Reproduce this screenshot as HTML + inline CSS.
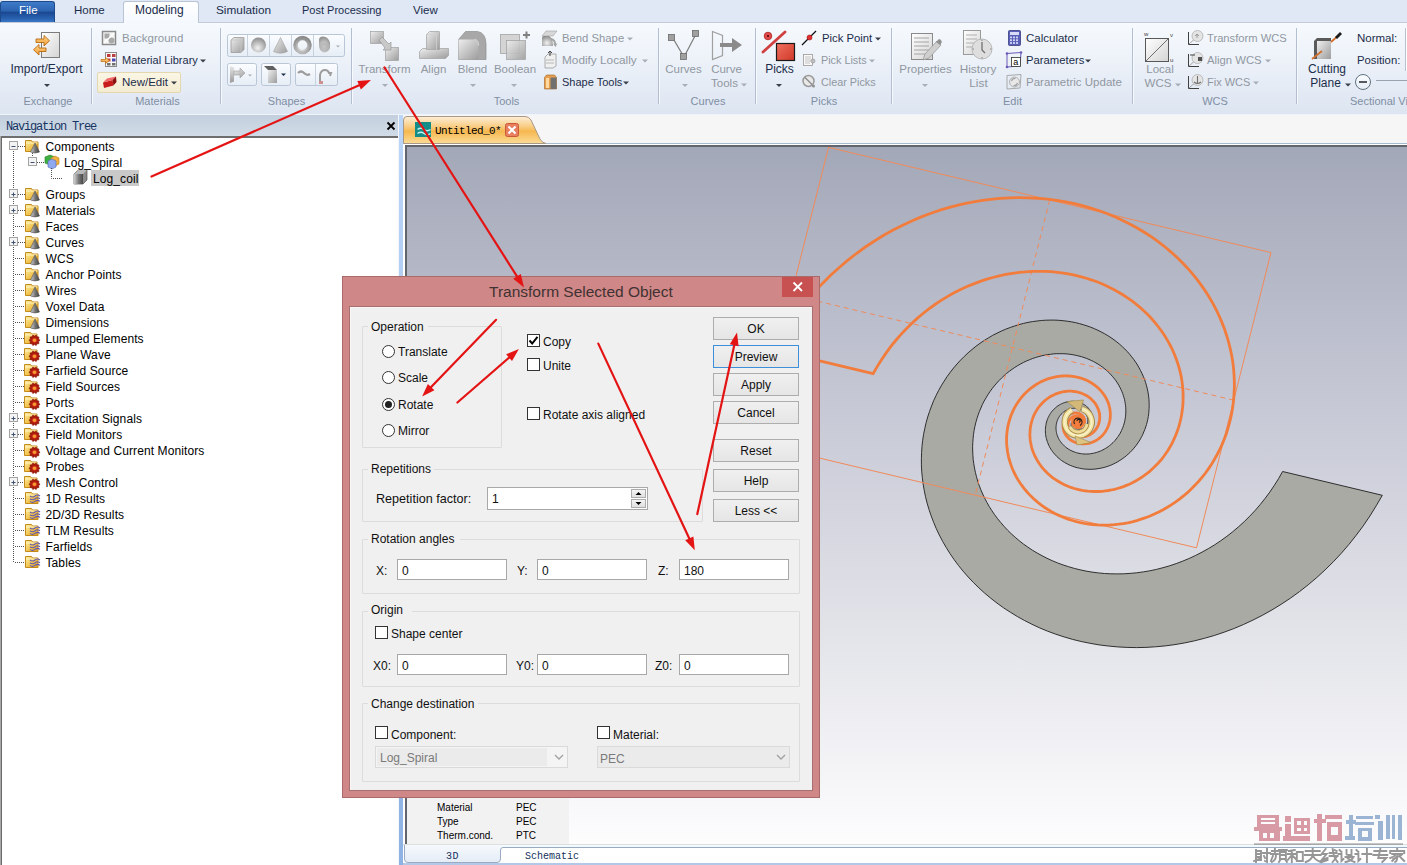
<!DOCTYPE html><html><head><meta charset="utf-8"><style>
html,body{margin:0;padding:0}
body{width:1407px;height:865px;overflow:hidden;position:relative;background:#fff;font-family:'Liberation Sans',sans-serif}
.a{position:absolute;box-sizing:border-box}
.t{position:absolute;white-space:nowrap}
svg{position:absolute;overflow:visible}
</style></head><body>
<div class="a" style="left:0px;top:0px;width:1407px;height:23px;background:#dfe8f4;border-bottom:1px solid #c2cbd7"></div>
<div class="a" style="left:0px;top:1px;width:55px;height:21px;background:linear-gradient(#3f7bc9 0%,#2c63b0 45%,#1b4892 52%,#2a64b3 85%,#3a78c6 100%);border:1px solid #1d4a8c;border-bottom:none;border-radius:3px 3px 0 0"></div>
<div class="t" style="left:19px;top:4px;font-size:11.5px;line-height:13px;color:#ffffff;font-family:'Liberation Sans',sans-serif;">File</div>
<div class="t" style="left:74px;top:4px;font-size:11.5px;line-height:13px;color:#1a2c4c;font-family:'Liberation Sans',sans-serif;">Home</div>
<div class="a" style="left:123px;top:1px;width:76px;height:23px;background:linear-gradient(#ffffff,#f4f8fd);border:1px solid #b9c5d5;border-bottom:none;border-radius:3px 3px 0 0"></div>
<div class="t" style="left:135px;top:4px;font-size:12px;line-height:13px;color:#1a2c4c;font-family:'Liberation Sans',sans-serif;">Modeling</div>
<div class="t" style="left:216px;top:4px;font-size:11.8px;line-height:13px;color:#1a2c4c;font-family:'Liberation Sans',sans-serif;">Simulation</div>
<div class="t" style="left:302px;top:4px;font-size:11px;line-height:12px;color:#1a2c4c;font-family:'Liberation Sans',sans-serif;">Post Processing</div>
<div class="t" style="left:413px;top:4px;font-size:11.5px;line-height:13px;color:#1a2c4c;font-family:'Liberation Sans',sans-serif;">View</div>
<div class="a" style="left:0px;top:23px;width:1407px;height:92px;background:linear-gradient(#f6fafe 0%,#edf2f9 40%,#e2e9f4 80%,#dce5f1 100%);border-bottom:1px solid #eef4fa"></div>
<div class="a" style="left:91px;top:28px;width:1px;height:76px;background:#b3bfd0"></div>
<div class="a" style="left:92px;top:28px;width:1px;height:76px;background:#f6f9fd"></div>
<div class="a" style="left:220px;top:28px;width:1px;height:76px;background:#b3bfd0"></div>
<div class="a" style="left:221px;top:28px;width:1px;height:76px;background:#f6f9fd"></div>
<div class="a" style="left:351px;top:28px;width:1px;height:76px;background:#b3bfd0"></div>
<div class="a" style="left:352px;top:28px;width:1px;height:76px;background:#f6f9fd"></div>
<div class="a" style="left:658px;top:28px;width:1px;height:76px;background:#b3bfd0"></div>
<div class="a" style="left:659px;top:28px;width:1px;height:76px;background:#f6f9fd"></div>
<div class="a" style="left:755px;top:28px;width:1px;height:76px;background:#b3bfd0"></div>
<div class="a" style="left:756px;top:28px;width:1px;height:76px;background:#f6f9fd"></div>
<div class="a" style="left:891px;top:28px;width:1px;height:76px;background:#b3bfd0"></div>
<div class="a" style="left:892px;top:28px;width:1px;height:76px;background:#f6f9fd"></div>
<div class="a" style="left:1132px;top:28px;width:1px;height:76px;background:#b3bfd0"></div>
<div class="a" style="left:1133px;top:28px;width:1px;height:76px;background:#f6f9fd"></div>
<div class="a" style="left:1296px;top:28px;width:1px;height:76px;background:#b3bfd0"></div>
<div class="a" style="left:1297px;top:28px;width:1px;height:76px;background:#f6f9fd"></div>
<div class="t" style="left:-52px;top:95px;width:200px;text-align:center;font-size:11px;line-height:12px;color:#7f8ea3;font-family:'Liberation Sans',sans-serif;">Exchange</div>
<div class="t" style="left:57.5px;top:95px;width:200px;text-align:center;font-size:11px;line-height:12px;color:#7f8ea3;font-family:'Liberation Sans',sans-serif;">Materials</div>
<div class="t" style="left:186.5px;top:95px;width:200px;text-align:center;font-size:11px;line-height:12px;color:#7f8ea3;font-family:'Liberation Sans',sans-serif;">Shapes</div>
<div class="t" style="left:406.5px;top:95px;width:200px;text-align:center;font-size:11px;line-height:12px;color:#7f8ea3;font-family:'Liberation Sans',sans-serif;">Tools</div>
<div class="t" style="left:608px;top:95px;width:200px;text-align:center;font-size:11px;line-height:12px;color:#7f8ea3;font-family:'Liberation Sans',sans-serif;">Curves</div>
<div class="t" style="left:724px;top:95px;width:200px;text-align:center;font-size:11px;line-height:12px;color:#7f8ea3;font-family:'Liberation Sans',sans-serif;">Picks</div>
<div class="t" style="left:912.5px;top:95px;width:200px;text-align:center;font-size:11px;line-height:12px;color:#7f8ea3;font-family:'Liberation Sans',sans-serif;">Edit</div>
<div class="t" style="left:1115px;top:95px;width:200px;text-align:center;font-size:11px;line-height:12px;color:#7f8ea3;font-family:'Liberation Sans',sans-serif;">WCS</div>
<div class="t" style="left:1350px;top:95px;font-size:11px;line-height:12px;color:#7f8ea3;font-family:'Liberation Sans',sans-serif;">Sectional View</div>
<div class="t" style="left:-53.5px;top:63px;width:200px;text-align:center;font-size:12px;line-height:13px;color:#1c2d4a;font-family:'Liberation Sans',sans-serif;">Import/Export</div>
<svg style="left:0;top:0" width="1" height="1"><path d="M44 84.0h6l-3 3z" fill="#3a3f4a"/></svg>
<div class="t" style="left:284.5px;top:63px;width:200px;text-align:center;font-size:11.5px;line-height:13px;color:#9097a1;font-family:'Liberation Sans',sans-serif;">Transform</div>
<svg style="left:0;top:0" width="1" height="1"><path d="M382 84.0h6l-3 3z" fill="#a8aeb8"/></svg>
<div class="t" style="left:333.5px;top:63px;width:200px;text-align:center;font-size:11.5px;line-height:13px;color:#9097a1;font-family:'Liberation Sans',sans-serif;">Align</div>
<div class="t" style="left:372.5px;top:63px;width:200px;text-align:center;font-size:11.5px;line-height:13px;color:#9097a1;font-family:'Liberation Sans',sans-serif;">Blend</div>
<svg style="left:0;top:0" width="1" height="1"><path d="M470 84.0h6l-3 3z" fill="#a8aeb8"/></svg>
<div class="t" style="left:415px;top:63px;width:200px;text-align:center;font-size:11.5px;line-height:13px;color:#9097a1;font-family:'Liberation Sans',sans-serif;">Boolean</div>
<svg style="left:0;top:0" width="1" height="1"><path d="M511 84.0h6l-3 3z" fill="#a8aeb8"/></svg>
<div class="t" style="left:583.5px;top:63px;width:200px;text-align:center;font-size:11.5px;line-height:13px;color:#9097a1;font-family:'Liberation Sans',sans-serif;">Curves</div>
<svg style="left:0;top:0" width="1" height="1"><path d="M682 84.0h6l-3 3z" fill="#a8aeb8"/></svg>
<div class="t" style="left:626.5px;top:63px;width:200px;text-align:center;font-size:11.5px;line-height:13px;color:#9097a1;font-family:'Liberation Sans',sans-serif;">Curve</div>
<div class="t" style="left:624.5px;top:77px;width:200px;text-align:center;font-size:11.5px;line-height:13px;color:#9097a1;font-family:'Liberation Sans',sans-serif;">Tools</div>
<svg style="left:0;top:0" width="1" height="1"><path d="M741 83.5h6l-3 3z" fill="#a8aeb8"/></svg>
<div class="t" style="left:679.5px;top:63px;width:200px;text-align:center;font-size:12px;line-height:13px;color:#1c2d4a;font-family:'Liberation Sans',sans-serif;">Picks</div>
<svg style="left:0;top:0" width="1" height="1"><path d="M776 84.0h6l-3 3z" fill="#3a3f4a"/></svg>
<div class="t" style="left:825.5px;top:63px;width:200px;text-align:center;font-size:11.5px;line-height:13px;color:#9097a1;font-family:'Liberation Sans',sans-serif;">Properties</div>
<svg style="left:0;top:0" width="1" height="1"><path d="M922 84.0h6l-3 3z" fill="#a8aeb8"/></svg>
<div class="t" style="left:878px;top:63px;width:200px;text-align:center;font-size:11.8px;line-height:13px;color:#9097a1;font-family:'Liberation Sans',sans-serif;">History</div>
<div class="t" style="left:878.5px;top:77px;width:200px;text-align:center;font-size:11.8px;line-height:13px;color:#9097a1;font-family:'Liberation Sans',sans-serif;">List</div>
<div class="t" style="left:1060px;top:63px;width:200px;text-align:center;font-size:11.5px;line-height:13px;color:#9097a1;font-family:'Liberation Sans',sans-serif;">Local</div>
<div class="t" style="left:1058px;top:77px;width:200px;text-align:center;font-size:11.5px;line-height:13px;color:#9097a1;font-family:'Liberation Sans',sans-serif;">WCS</div>
<svg style="left:0;top:0" width="1" height="1"><path d="M1175 83.5h6l-3 3z" fill="#a8aeb8"/></svg>
<div class="t" style="left:1227px;top:63px;width:200px;text-align:center;font-size:12px;line-height:13px;color:#1c2d4a;font-family:'Liberation Sans',sans-serif;">Cutting</div>
<div class="t" style="left:1225.5px;top:77px;width:200px;text-align:center;font-size:12px;line-height:13px;color:#1c2d4a;font-family:'Liberation Sans',sans-serif;">Plane</div>
<svg style="left:0;top:0" width="1" height="1"><path d="M1345 83.5h6l-3 3z" fill="#3a3f4a"/></svg>
<div class="a" style="left:97px;top:72px;width:84px;height:21px;background:linear-gradient(#fbf6e4,#f3ecd2);border:1px solid #e4d8b0;border-radius:2px"></div>
<div class="t" style="left:122px;top:32px;font-size:11.5px;line-height:13px;color:#9097a1;font-family:'Liberation Sans',sans-serif;">Background</div>
<div class="t" style="left:122px;top:54px;font-size:11px;line-height:12px;color:#1c2d4a;font-family:'Liberation Sans',sans-serif;">Material Library</div>
<svg style="left:0;top:0" width="1" height="1"><path d="M200 59.5h6l-3 3z" fill="#3a3f4a"/></svg>
<div class="t" style="left:122px;top:76px;font-size:11.5px;line-height:13px;color:#1c2d4a;font-family:'Liberation Sans',sans-serif;">New/Edit</div>
<svg style="left:0;top:0" width="1" height="1"><path d="M171 81.5h6l-3 3z" fill="#3a3f4a"/></svg>
<div class="t" style="left:562px;top:32px;font-size:11.3px;line-height:13px;color:#9097a1;font-family:'Liberation Sans',sans-serif;">Bend Shape</div>
<svg style="left:0;top:0" width="1" height="1"><path d="M627 37.5h6l-3 3z" fill="#a8aeb8"/></svg>
<div class="t" style="left:562px;top:54px;font-size:11.8px;line-height:13px;color:#9097a1;font-family:'Liberation Sans',sans-serif;">Modify Locally</div>
<svg style="left:0;top:0" width="1" height="1"><path d="M642 59.5h6l-3 3z" fill="#a8aeb8"/></svg>
<div class="t" style="left:562px;top:76px;font-size:11px;line-height:12px;color:#1c2d4a;font-family:'Liberation Sans',sans-serif;">Shape Tools</div>
<svg style="left:0;top:0" width="1" height="1"><path d="M623 81.5h6l-3 3z" fill="#3a3f4a"/></svg>
<div class="t" style="left:822px;top:32px;font-size:11.3px;line-height:13px;color:#1c2d4a;font-family:'Liberation Sans',sans-serif;">Pick Point</div>
<svg style="left:0;top:0" width="1" height="1"><path d="M875 37.5h6l-3 3z" fill="#3a3f4a"/></svg>
<div class="t" style="left:821px;top:54px;font-size:10.8px;line-height:12px;color:#9097a1;font-family:'Liberation Sans',sans-serif;">Pick Lists</div>
<svg style="left:0;top:0" width="1" height="1"><path d="M869 59.5h6l-3 3z" fill="#a8aeb8"/></svg>
<div class="t" style="left:821px;top:76px;font-size:10.8px;line-height:12px;color:#9097a1;font-family:'Liberation Sans',sans-serif;">Clear Picks</div>
<div class="t" style="left:1026px;top:32px;font-size:11.5px;line-height:13px;color:#1c2d4a;font-family:'Liberation Sans',sans-serif;">Calculator</div>
<div class="t" style="left:1026px;top:54px;font-size:11.3px;line-height:13px;color:#1c2d4a;font-family:'Liberation Sans',sans-serif;">Parameters</div>
<svg style="left:0;top:0" width="1" height="1"><path d="M1085 59.5h6l-3 3z" fill="#3a3f4a"/></svg>
<div class="t" style="left:1026px;top:76px;font-size:11.5px;line-height:13px;color:#9097a1;font-family:'Liberation Sans',sans-serif;">Parametric Update</div>
<div class="t" style="left:1207px;top:32px;font-size:11.2px;line-height:13px;color:#9097a1;font-family:'Liberation Sans',sans-serif;">Transform WCS</div>
<div class="t" style="left:1207px;top:54px;font-size:11.3px;line-height:13px;color:#9097a1;font-family:'Liberation Sans',sans-serif;">Align WCS</div>
<svg style="left:0;top:0" width="1" height="1"><path d="M1265 59.5h6l-3 3z" fill="#a8aeb8"/></svg>
<div class="t" style="left:1207px;top:76px;font-size:11px;line-height:12px;color:#9097a1;font-family:'Liberation Sans',sans-serif;">Fix WCS</div>
<svg style="left:0;top:0" width="1" height="1"><path d="M1253 81.5h6l-3 3z" fill="#a8aeb8"/></svg>
<div class="t" style="left:1357px;top:32px;font-size:11.5px;line-height:13px;color:#1c2d4a;font-family:'Liberation Sans',sans-serif;">Normal:</div>
<div class="t" style="left:1357px;top:54px;font-size:11.3px;line-height:13px;color:#1c2d4a;font-family:'Liberation Sans',sans-serif;">Position:</div>
<div class="a" style="left:1405px;top:28px;width:2px;height:43px;background:#fff;border-left:1px solid #b8c2ce"></div>
<svg style="left:0;top:23px" width="1407" height="92" viewBox="0 23 1407 92">
<defs>
<linearGradient id="gy" x1="0" y1="0" x2="1" y2="1"><stop offset="0" stop-color="#eeeeee"/><stop offset="1" stop-color="#9c9c9c"/></linearGradient>
<linearGradient id="gyv" x1="0" y1="0" x2="0" y2="1"><stop offset="0" stop-color="#e8e8e8"/><stop offset="1" stop-color="#9a9a9a"/></linearGradient>
<radialGradient id="sph" cx="0.45" cy="0.7" r="0.7"><stop offset="0" stop-color="#f2f2f2"/><stop offset="1" stop-color="#8c8c8c"/></radialGradient>
<linearGradient id="og" x1="0" y1="0" x2="0" y2="1"><stop offset="0" stop-color="#ffd890"/><stop offset="1" stop-color="#f09a30"/></linearGradient>
<linearGradient id="doc" x1="0" y1="0" x2="1" y2="1"><stop offset="0" stop-color="#ffffff"/><stop offset="1" stop-color="#d4d4d4"/></linearGradient>
<linearGradient id="btn" x1="0" y1="0" x2="0" y2="1"><stop offset="0" stop-color="#fbfdff"/><stop offset="1" stop-color="#e6edf6"/></linearGradient>
<linearGradient id="redg" x1="0" y1="0" x2="1" y2="1"><stop offset="0" stop-color="#f07060"/><stop offset="1" stop-color="#d03828"/></linearGradient>
</defs>
<rect x="41.5" y="32.5" width="18" height="25" fill="url(#doc)" stroke="#7c7c7c"/>
<path d="M36 39h8v-3.5l5.5 5.25l-5.5 5.25v-3.5h-8z" fill="url(#og)" stroke="#b86a10" stroke-width="0.9"/>
<path d="M46 48h-7v-3.5l-5.5 5.25l5.5 5.25v-3.5h7z" fill="url(#og)" stroke="#b86a10" stroke-width="0.9"/>
<rect x="102.5" y="31.5" width="13" height="13" fill="#f4f4f4" stroke="#8a8a8a" stroke-width="1.5"/>
<rect x="104.5" y="33.5" width="5" height="5" fill="#a8a8a8"/><circle cx="111.5" cy="40.5" r="3" fill="#a8a8a8"/><path d="M104 43L114 33" stroke="#fff" stroke-width="1.2"/>
<rect x="105.5" y="52.5" width="11" height="14" fill="#fafafa" stroke="#8a8a8a"/>
<rect x="107" y="54" width="3.5" height="3" fill="#c03838"/><rect x="112" y="54" width="3.5" height="3" fill="#b84040"/><rect x="107" y="58.5" width="3.5" height="3" fill="#c84040"/><rect x="112" y="58.5" width="3.5" height="3" fill="#4848b0"/><rect x="107" y="63" width="3.5" height="2.5" fill="#707070"/><rect x="112" y="63" width="3.5" height="2.5" fill="#707070"/>
<path d="M101 59.5h4.5v-2l4 3l-4 3v-2h-4.5z" fill="url(#og)" stroke="#b86a10" stroke-width="0.7"/>
<path d="M103 82.5L112.5 80L113.5 85.5L104 88Z" fill="#c81c1c"/><path d="M103 82.5L107 78.5L116 76.5L112.5 80Z" fill="#f06868"/><path d="M112.5 80L116 76.5L116.5 82L113.5 85.5Z" fill="#8c1010"/>
<rect x="227.5" y="34.5" width="117" height="22" rx="2" fill="url(#btn)" stroke="#b9c6d6"/>
<rect x="227.5" y="63.5" width="29" height="22" rx="2" fill="url(#btn)" stroke="#b9c6d6"/>
<rect x="261.5" y="63.5" width="29" height="22" rx="2" fill="url(#btn)" stroke="#b9c6d6"/>
<rect x="295.5" y="63.5" width="42" height="22" rx="2" fill="url(#btn)" stroke="#b9c6d6"/>
<path d="M247.5 35V56" stroke="#c8d2de"/>
<path d="M269.5 35V56" stroke="#c8d2de"/>
<path d="M291.5 35V56" stroke="#c8d2de"/>
<path d="M313.5 35V56" stroke="#c8d2de"/>
<path d="M315.5 64V85" stroke="#c8d2de"/>
<path d="M231 40l3-2.5h10v12l-3 3h-10z" fill="url(#gy)" stroke="#9a9a9a" stroke-width="0.8"/><path d="M231 40h10v12.5M241 40l3-2.5" fill="none" stroke="#c4c4c4" stroke-width="0.8"/>
<circle cx="258.5" cy="45" r="7.5" fill="url(#sph)"/>
<path d="M280.5 37.5L273.5 51.5Q280.5 55 287.5 51.5Z" fill="url(#gy)" stroke="#a0a0a0" stroke-width="0.6"/>
<circle cx="302.5" cy="45" r="7" fill="none" stroke="url(#sph)" stroke-width="4.5"/><circle cx="302.5" cy="45" r="7" fill="none" stroke="#9a9a9a" stroke-width="0.6" opacity="0.6"/>
<path d="M319 40q0-3.5 4-3.5q5 0 7 6v5q-1 4-5 4q-6-1-6-6z" fill="url(#sph)"/><ellipse cx="324.5" cy="47.5" rx="5" ry="5" fill="#b0b0b0" opacity="0.7"/>
<path d="M336 45.5h4l-2 2z" fill="#a8aeb8"/>
<path d="M230 66l4 1.5v14l-4 1.5z" fill="url(#gyv)"/><path d="M234 71h6v-3l5 5l-5 5v-3h-6z" fill="url(#gy)" stroke="#a0a0a0" stroke-width="0.6"/>
<path d="M248 74.5h4l-2 2z" fill="#a8aeb8"/>
<path d="M264 66h9l4 4v13h-9v-13z" fill="#606060"/><path d="M268 70h9v13h-9z" fill="url(#gy)"/>
<path d="M281 73.5h5l-2.5 2.5z" fill="#1c2d4a"/>
<path d="M298 73q3-3 6 0t6 1" fill="none" stroke="#9c9c9c" stroke-width="2.2"/>
<path d="M320 82v-7q1-5 5-5q3 0 4 3l2 0l-1 3" fill="none" stroke="#9c9c9c" stroke-width="2"/><rect x="319" y="81" width="4" height="3" fill="#d09090"/>
<rect x="370.5" y="31.5" width="13" height="12" fill="url(#gy)" stroke="#a0a0a0" stroke-width="0.7"/>
<rect x="385.5" y="47.5" width="13" height="13" fill="url(#gy)" stroke="#a0a0a0" stroke-width="0.7"/>
<path d="M379 40l3-3l7 7l2-2v8h-8l2-2z" fill="#c8c8c8" stroke="#9a9a9a" stroke-width="0.7"/>
<path d="M419.5 51.5l3-3h26v7l-3 3h-26z" fill="url(#gy)" stroke="#a0a0a0" stroke-width="0.7"/><path d="M426.5 34.5l3-3h10v18h-13z" fill="url(#gy)" stroke="#a0a0a0" stroke-width="0.7"/><path d="M426.5 34.5h10v15M436.5 34.5l3-3" fill="none" stroke="#d0d0d0" stroke-width="0.8"/>
<path d="M458.5 59.5v-20l7-8h12q8 1 8.5 12v16z" fill="#a8a8a8" stroke="#8e8e8e" stroke-width="0.7"/><path d="M458.5 39.5h16q4 0 4 6v14h-20z" fill="url(#gy)"/><path d="M478.5 45.5q0-6-4-6" fill="none" stroke="#d8d8d8" stroke-width="1"/>
<rect x="500.5" y="34.5" width="19" height="19" fill="#d4d4d4" stroke="#a4a4a4" stroke-width="0.8"/><rect x="506.5" y="40.5" width="19" height="19" fill="url(#gy)" stroke="#a0a0a0" stroke-width="0.8" opacity="0.9"/>
<path d="M523 35h7M526.5 31.5v7" stroke="#808080" stroke-width="2"/>
<path d="M542 36l4-5h11l-4 5z" fill="#d8d8d8" stroke="#a0a0a0" stroke-width="0.6"/><path d="M542 46v-8q0-2 2-2h5q4 2 4 10z" fill="url(#sph)"/><path d="M551 38q5 1 5 6l1.5-1l-2 4l-2.5-3.5h1.5q-1-3-3.5-4z" fill="#a0a0a0"/>
<path d="M545 57l3-3h8v12l-3 2h-8z" fill="#f0f0f0" stroke="#9a9a9a" stroke-width="0.8"/><path d="M546 60h8M546 63h8" stroke="#a8a8a8" stroke-width="0.8"/><path d="M550 56v-5M548 53l2-2l2 2" fill="none" stroke="#404040" stroke-width="1"/>
<path d="M544.5 77.5l2-2.5h8l2 2.5v11.5h-12z" fill="#e8a050" stroke="#a06020" stroke-width="0.6"/><path d="M550.5 77.5h6v11.5h-6z" fill="#707070"/><path d="M546 78h3v10h-3z" fill="#ffd8a0"/>
<path d="M672.5 37.5L684 57L696 34" fill="none" stroke="#808080" stroke-width="1.3"/>
<rect x="668.5" y="34.5" width="6" height="6" fill="#a0a0a0" stroke="#6c6c6c" stroke-width="0.8"/>
<rect x="692.5" y="30.5" width="6" height="6" fill="#a0a0a0" stroke="#6c6c6c" stroke-width="0.8"/>
<rect x="680.5" y="53.5" width="6" height="6" fill="#a0a0a0" stroke="#6c6c6c" stroke-width="0.8"/>
<path d="M712.5 31.5l10 4v20l-10 4z" fill="none" stroke="#a0a0a0" stroke-width="1.2"/><path d="M720 43h12v-5l10 7l-10 7v-5h-12z" fill="#8a8a8a"/>
<path d="M763 52L785 32" stroke="#d04040" stroke-width="2.8" stroke-linecap="round"/><circle cx="768" cy="36" r="3.8" fill="#e04a4a" stroke="#b02020" stroke-width="0.8"/><circle cx="768" cy="36" r="1" fill="#400"/>
<rect x="776.5" y="43.5" width="18" height="17" fill="url(#redg)" stroke="#1a1a1a" stroke-width="1.2"/>
<path d="M802 45L816 31" stroke="#101010" stroke-width="1.3"/><circle cx="809.5" cy="37.5" r="2.5" fill="#e03030" stroke="#a01010" stroke-width="0.6"/>
<rect x="803.5" y="54.5" width="9" height="11" fill="#f8f8f8" stroke="#9a9a9a" stroke-width="0.8"/><path d="M805 57h6M805 59h6M805 61h6M805 63h5" stroke="#b0b0b0" stroke-width="0.7"/><circle cx="813" cy="61" r="2" fill="#c0c0c0" stroke="#909090" stroke-width="0.6"/>
<circle cx="808.5" cy="81" r="5.5" fill="#e8e8e8" stroke="#9a9a9a" stroke-width="1.5"/><path d="M805 77.5l7 7" stroke="#8a8a8a" stroke-width="1.3"/><circle cx="813.5" cy="86" r="1.5" fill="#909090"/>
<rect x="911.5" y="33.5" width="21" height="26" fill="url(#doc)" stroke="#8a8a8a"/>
<path d="M914 38h15" stroke="#a4a4a4" stroke-width="1"/>
<path d="M914 42h15" stroke="#a4a4a4" stroke-width="1"/>
<path d="M914 46h15" stroke="#a4a4a4" stroke-width="1"/>
<path d="M914 50h15" stroke="#a4a4a4" stroke-width="1"/>
<path d="M914 54h15" stroke="#a4a4a4" stroke-width="1"/>
<path d="M923 60l2-6l12-13l4 4l-12 13z" fill="#cfcfcf" stroke="#9a9a9a" stroke-width="0.8"/><path d="M936 42l3-3q2 0 3 3l-2 3z" fill="#909090"/>
<rect x="963.5" y="30.5" width="17" height="24" fill="url(#doc)" stroke="#9a9a9a"/>
<path d="M966 35h11" stroke="#b0b0b0" stroke-width="1"/>
<path d="M966 39h11" stroke="#b0b0b0" stroke-width="1"/>
<path d="M966 43h11" stroke="#b0b0b0" stroke-width="1"/>
<path d="M966 47h11" stroke="#b0b0b0" stroke-width="1"/>
<circle cx="982" cy="49" r="10" fill="#dedede" stroke="#b4b4b4" stroke-width="0.9"/><path d="M982 42v8l3 3" fill="none" stroke="#707070" stroke-width="1.3"/><path d="M982 39.5v1.5M982 57v1.5M972.5 49h1.5M990 49h1.5" stroke="#8a8a8a" stroke-width="1"/>
<rect x="1008.5" y="30.5" width="12" height="15" rx="1" fill="#5860b8" stroke="#383c80" stroke-width="0.8"/><rect x="1010" y="32" width="9" height="3" fill="#d8dcf8"/>
<rect x="1010" y="36.5" width="2" height="1.8" fill="#d0d4f4"/>
<rect x="1013" y="36.5" width="2" height="1.8" fill="#d0d4f4"/>
<rect x="1016" y="36.5" width="2" height="1.8" fill="#d0d4f4"/>
<rect x="1010" y="39.3" width="2" height="1.8" fill="#d0d4f4"/>
<rect x="1013" y="39.3" width="2" height="1.8" fill="#d0d4f4"/>
<rect x="1016" y="39.3" width="2" height="1.8" fill="#d0d4f4"/>
<rect x="1010" y="42.1" width="2" height="1.8" fill="#d0d4f4"/>
<rect x="1013" y="42.1" width="2" height="1.8" fill="#d0d4f4"/>
<rect x="1016" y="42.1" width="2" height="1.8" fill="#d0d4f4"/>
<path d="M1007 53.5L1021 52.5L1020 66L1007 67z" fill="none" stroke="#6a5ab8" stroke-width="1"/><rect x="1011.5" y="57.5" width="9" height="9" fill="#fff" stroke="#303030" stroke-width="0.8"/><text x="1013.2" y="65" font-family="Liberation Sans" font-size="9" fill="#000">a</text>
<circle cx="1007" cy="53.5" r="1.3" fill="#6a5ab8"/>
<circle cx="1021" cy="52.5" r="1.3" fill="#6a5ab8"/>
<circle cx="1007" cy="67" r="1.3" fill="#6a5ab8"/>
<path d="M1007 75.5L1021 74.5L1020 88L1007 89z" fill="none" stroke="#a8a8a8" stroke-width="1"/><circle cx="1014.5" cy="82" r="5" fill="#e8e8e8" stroke="#b0b0b0" stroke-width="1"/><path d="M1011.5 81q1-3 4-2.5M1017.5 83q-1 3-4 2.5" fill="none" stroke="#a0a0a0" stroke-width="1.2"/>
<rect x="1145.5" y="38.5" width="23" height="23" fill="url(#doc)" stroke="#585858" stroke-width="1"/><path d="M1146 61L1168 39" stroke="#606060" stroke-width="0.9"/>
<text x="1144" y="36" font-family="Liberation Sans" font-size="6" fill="#404040">w</text><text x="1170" y="37" font-family="Liberation Sans" font-size="6" fill="#404040">v</text><text x="1170" y="62" font-family="Liberation Sans" font-size="6" fill="#404040">u</text>
<path d="M1188.5 32V44.5H1199" fill="none" stroke="#404040" stroke-width="1"/><path d="M1189 44L1198 36" stroke="#909090" stroke-width="0.8"/>
<circle cx="1197.5" cy="36" r="5.5" fill="#e4e4e4" stroke="#b0b0b0" stroke-width="0.8"/>
<path d="M1188.5 54V66.5H1199" fill="none" stroke="#404040" stroke-width="1"/><path d="M1189 66L1198 58" stroke="#909090" stroke-width="0.8"/>
<circle cx="1197.5" cy="58" r="5.5" fill="#e4e4e4" stroke="#b0b0b0" stroke-width="0.8"/>
<path d="M1188.5 76V88.5H1199" fill="none" stroke="#404040" stroke-width="1"/><path d="M1189 88L1198 80" stroke="#909090" stroke-width="0.8"/>
<circle cx="1197.5" cy="80" r="5.5" fill="#e4e4e4" stroke="#b0b0b0" stroke-width="0.8"/>
<path d="M1195 36l2-2l2 2M1197 34v4" fill="none" stroke="#909090" stroke-width="0.9"/>
<rect x="1198" y="57" width="4" height="4" fill="#505050"/><path d="M1190 55h5" stroke="#303030" stroke-width="0.9"/>
<path d="M1197.5 76v7M1194 82q3.5 3 7 0" fill="none" stroke="#707070" stroke-width="1.1"/>
<path d="M1314 41l3-3h14v18l-3 3h-14z" fill="#5a5a5a"/><path d="M1317 41h14v18h-14z" fill="url(#gy)"/><path d="M1312 59l10-8M1331 42l8-7" stroke="#d07030" stroke-width="1.8"/><path d="M1335 37l5-5l2 2l-5 5z" fill="#1a1a1a"/>
<circle cx="1363" cy="82" r="7.5" fill="url(#btn)" stroke="#607080" stroke-width="1"/><path d="M1359 82h8" stroke="#404850" stroke-width="1.8"/><path d="M1376 80.5H1407" stroke="#9aa4b0" stroke-width="1"/>
</svg>
<div class="a" style="left:0px;top:115px;width:399px;height:23px;background:linear-gradient(#c3cfdd,#d3dde9)"></div>
<div class="t" style="left:6px;top:121px;font-size:12px;line-height:13px;color:#173563;font-family:'Liberation Mono',monospace;letter-spacing:-1.2px">Navigation Tree</div>
<svg style="left:386px;top:121px" width="10" height="10"><path d="M1.5 1.5L8.5 8.5M8.5 1.5L1.5 8.5" stroke="#000" stroke-width="1.8"/></svg>
<div class="a" style="left:0px;top:136px;width:399px;height:729px;background:#fff;border-top:2px solid #6e6e6e;border-left:2px solid #6a6a6a;border-right:1px solid #d0d0d0"></div>
<div class="a" style="left:0px;top:136px;width:1px;height:729px;background:#a8a8a8"></div>
<svg style="left:0;top:137px" width="399" height="728" viewBox="0 137 399 728">
<defs><linearGradient id="fg" x1="0" y1="0" x2="1" y2="1"><stop offset="0" stop-color="#fff0a8"/><stop offset="0.6" stop-color="#f0c048"/><stop offset="1" stop-color="#d89820"/></linearGradient><radialGradient id="gg"><stop offset="0.2" stop-color="#ff9a30"/><stop offset="0.45" stop-color="#b82010"/><stop offset="1" stop-color="#901008"/></radialGradient><linearGradient id="cg" x1="0" y1="0" x2="1" y2="0"><stop offset="0" stop-color="#d8d8d8"/><stop offset="0.5" stop-color="#7a7a7a"/><stop offset="1" stop-color="#404040"/></linearGradient></defs>
<path d="M13.5 151V562.5" fill="none" stroke="#505050" stroke-width="1" stroke-dasharray="1 1"/>
<path d="M18 146.5H25" fill="none" stroke="#505050" stroke-width="1" stroke-dasharray="1 1"/>
<rect x="9.5" y="141.5" width="8" height="8" fill="#f4f4f4" stroke="#a4a4a4"/>
<path d="M11.5 146.5h4" stroke="#405070" stroke-width="1"/>
<path d="M25.5 140.5h6l1 1.5h5.5v9.5h-12.5z" fill="url(#fg)" stroke="#c48a1c" stroke-width="1"/><path d="M26 143h11.5" stroke="#fff3c0" stroke-width="1"/>
<path d="M35 143L30.5 152Q35 154 39.5 152Z" fill="url(#cg)" stroke="#505050" stroke-width="0.6"/>
<path d="M32.5 153V158M37 162.5H44" fill="none" stroke="#505050" stroke-width="1" stroke-dasharray="1 1"/>
<rect x="28.5" y="157.5" width="8" height="8" fill="#f4f4f4" stroke="#a4a4a4"/>
<path d="M30.5 162.5h4" stroke="#405070" stroke-width="1"/>
<path d="M45 157l5-2l5 2v6l-5 2l-5-2z" fill="#40b040" stroke="#208020" stroke-width="0.6"/>
<path d="M51 158l4-2l4 2v6l-4 2l-4-2z" fill="#f0b040" stroke="#c08020" stroke-width="0.6"/>
<path d="M48 161l4-2l4 2v6l-4 2l-4-2z" fill="#90a8f0" stroke="#5068c0" stroke-width="0.6"/>
<path d="M51.5 168V178.5H62" fill="none" stroke="#505050" stroke-width="1" stroke-dasharray="1 1"/>
<path d="M74 174l4-4h9v10l-4 4h-9z" fill="#8a8a8a" stroke="#505050" stroke-width="0.7"/>
<path d="M74 174h9v10h-9z" fill="url(#cg)" opacity="0.9"/>
<path d="M74 174l4-4h9l-4 4z" fill="#b8b8b8"/>
<path d="M18 194.5H25" fill="none" stroke="#505050" stroke-width="1" stroke-dasharray="1 1"/>
<rect x="9.5" y="189.5" width="8" height="8" fill="#f4f4f4" stroke="#a4a4a4"/>
<path d="M11.5 194.5h4" stroke="#405070" stroke-width="1"/>
<path d="M13.5 192.5v4" stroke="#405070" stroke-width="1"/>
<path d="M25.5 188.5h6l1 1.5h5.5v9.5h-12.5z" fill="url(#fg)" stroke="#c48a1c" stroke-width="1"/><path d="M26 191h11.5" stroke="#fff3c0" stroke-width="1"/>
<path d="M35 191L30.5 200Q35 202 39.5 200Z" fill="url(#cg)" stroke="#505050" stroke-width="0.6"/>
<path d="M18 210.5H25" fill="none" stroke="#505050" stroke-width="1" stroke-dasharray="1 1"/>
<rect x="9.5" y="205.5" width="8" height="8" fill="#f4f4f4" stroke="#a4a4a4"/>
<path d="M11.5 210.5h4" stroke="#405070" stroke-width="1"/>
<path d="M13.5 208.5v4" stroke="#405070" stroke-width="1"/>
<path d="M25.5 204.5h6l1 1.5h5.5v9.5h-12.5z" fill="url(#fg)" stroke="#c48a1c" stroke-width="1"/><path d="M26 207h11.5" stroke="#fff3c0" stroke-width="1"/>
<path d="M35 207L30.5 216Q35 218 39.5 216Z" fill="url(#cg)" stroke="#505050" stroke-width="0.6"/>
<path d="M15 226.5H25" fill="none" stroke="#505050" stroke-width="1" stroke-dasharray="1 1"/>
<path d="M25.5 220.5h6l1 1.5h5.5v9.5h-12.5z" fill="url(#fg)" stroke="#c48a1c" stroke-width="1"/><path d="M26 223h11.5" stroke="#fff3c0" stroke-width="1"/>
<path d="M35 223L30.5 232Q35 234 39.5 232Z" fill="url(#cg)" stroke="#505050" stroke-width="0.6"/>
<path d="M18 242.5H25" fill="none" stroke="#505050" stroke-width="1" stroke-dasharray="1 1"/>
<rect x="9.5" y="237.5" width="8" height="8" fill="#f4f4f4" stroke="#a4a4a4"/>
<path d="M11.5 242.5h4" stroke="#405070" stroke-width="1"/>
<path d="M13.5 240.5v4" stroke="#405070" stroke-width="1"/>
<path d="M25.5 236.5h6l1 1.5h5.5v9.5h-12.5z" fill="url(#fg)" stroke="#c48a1c" stroke-width="1"/><path d="M26 239h11.5" stroke="#fff3c0" stroke-width="1"/>
<path d="M35 239L30.5 248Q35 250 39.5 248Z" fill="url(#cg)" stroke="#505050" stroke-width="0.6"/>
<path d="M15 258.5H25" fill="none" stroke="#505050" stroke-width="1" stroke-dasharray="1 1"/>
<path d="M25.5 252.5h6l1 1.5h5.5v9.5h-12.5z" fill="url(#fg)" stroke="#c48a1c" stroke-width="1"/><path d="M26 255h11.5" stroke="#fff3c0" stroke-width="1"/>
<path d="M35 255L30.5 264Q35 266 39.5 264Z" fill="url(#cg)" stroke="#505050" stroke-width="0.6"/>
<path d="M15 274.5H25" fill="none" stroke="#505050" stroke-width="1" stroke-dasharray="1 1"/>
<path d="M25.5 268.5h6l1 1.5h5.5v9.5h-12.5z" fill="url(#fg)" stroke="#c48a1c" stroke-width="1"/><path d="M26 271h11.5" stroke="#fff3c0" stroke-width="1"/>
<path d="M35 271L30.5 280Q35 282 39.5 280Z" fill="url(#cg)" stroke="#505050" stroke-width="0.6"/>
<path d="M15 290.5H25" fill="none" stroke="#505050" stroke-width="1" stroke-dasharray="1 1"/>
<path d="M25.5 284.5h6l1 1.5h5.5v9.5h-12.5z" fill="url(#fg)" stroke="#c48a1c" stroke-width="1"/><path d="M26 287h11.5" stroke="#fff3c0" stroke-width="1"/>
<path d="M35 287L30.5 296Q35 298 39.5 296Z" fill="url(#cg)" stroke="#505050" stroke-width="0.6"/>
<path d="M15 306.5H25" fill="none" stroke="#505050" stroke-width="1" stroke-dasharray="1 1"/>
<path d="M25.5 300.5h6l1 1.5h5.5v9.5h-12.5z" fill="url(#fg)" stroke="#c48a1c" stroke-width="1"/><path d="M26 303h11.5" stroke="#fff3c0" stroke-width="1"/>
<path d="M35 303L30.5 312Q35 314 39.5 312Z" fill="url(#cg)" stroke="#505050" stroke-width="0.6"/>
<path d="M15 322.5H25" fill="none" stroke="#505050" stroke-width="1" stroke-dasharray="1 1"/>
<path d="M25.5 316.5h6l1 1.5h5.5v9.5h-12.5z" fill="url(#fg)" stroke="#c48a1c" stroke-width="1"/><path d="M26 319h11.5" stroke="#fff3c0" stroke-width="1"/>
<path d="M35 319L30.5 328Q35 330 39.5 328Z" fill="url(#cg)" stroke="#505050" stroke-width="0.6"/>
<path d="M15 338.5H25" fill="none" stroke="#505050" stroke-width="1" stroke-dasharray="1 1"/>
<path d="M24.5 332.5h6l1 1.5h5.5v9.5h-12.5z" fill="url(#fg)" stroke="#c48a1c" stroke-width="1"/><path d="M25 335h11.5" stroke="#fff3c0" stroke-width="1"/>
<path d="M40.1 340.3 L38.6 341.6 L39.0 343.6 L37.0 343.8 L36.2 345.6 L34.5 344.6 L32.8 345.6 L32.0 343.8 L30.0 343.6 L30.4 341.6 L28.9 340.3 L30.4 339.0 L30.0 337.0 L32.0 336.8 L32.8 335.0 L34.5 336.0 L36.2 335.0 L37.0 336.8 L39.0 337.0 L38.6 339.0Z" fill="url(#gg)" stroke="#901808" stroke-width="0.6"/>
<path d="M15 354.5H25" fill="none" stroke="#505050" stroke-width="1" stroke-dasharray="1 1"/>
<path d="M24.5 348.5h6l1 1.5h5.5v9.5h-12.5z" fill="url(#fg)" stroke="#c48a1c" stroke-width="1"/><path d="M25 351h11.5" stroke="#fff3c0" stroke-width="1"/>
<path d="M40.1 356.3 L38.6 357.6 L39.0 359.6 L37.0 359.8 L36.2 361.6 L34.5 360.6 L32.8 361.6 L32.0 359.8 L30.0 359.6 L30.4 357.6 L28.9 356.3 L30.4 355.0 L30.0 353.0 L32.0 352.8 L32.8 351.0 L34.5 352.0 L36.2 351.0 L37.0 352.8 L39.0 353.0 L38.6 355.0Z" fill="url(#gg)" stroke="#901808" stroke-width="0.6"/>
<path d="M15 370.5H25" fill="none" stroke="#505050" stroke-width="1" stroke-dasharray="1 1"/>
<path d="M24.5 364.5h6l1 1.5h5.5v9.5h-12.5z" fill="url(#fg)" stroke="#c48a1c" stroke-width="1"/><path d="M25 367h11.5" stroke="#fff3c0" stroke-width="1"/>
<path d="M40.1 372.3 L38.6 373.6 L39.0 375.6 L37.0 375.8 L36.2 377.6 L34.5 376.6 L32.8 377.6 L32.0 375.8 L30.0 375.6 L30.4 373.6 L28.9 372.3 L30.4 371.0 L30.0 369.0 L32.0 368.8 L32.8 367.0 L34.5 368.0 L36.2 367.0 L37.0 368.8 L39.0 369.0 L38.6 371.0Z" fill="url(#gg)" stroke="#901808" stroke-width="0.6"/>
<path d="M15 386.5H25" fill="none" stroke="#505050" stroke-width="1" stroke-dasharray="1 1"/>
<path d="M24.5 380.5h6l1 1.5h5.5v9.5h-12.5z" fill="url(#fg)" stroke="#c48a1c" stroke-width="1"/><path d="M25 383h11.5" stroke="#fff3c0" stroke-width="1"/>
<path d="M40.1 388.3 L38.6 389.6 L39.0 391.6 L37.0 391.8 L36.2 393.6 L34.5 392.6 L32.8 393.6 L32.0 391.8 L30.0 391.6 L30.4 389.6 L28.9 388.3 L30.4 387.0 L30.0 385.0 L32.0 384.8 L32.8 383.0 L34.5 384.0 L36.2 383.0 L37.0 384.8 L39.0 385.0 L38.6 387.0Z" fill="url(#gg)" stroke="#901808" stroke-width="0.6"/>
<path d="M15 402.5H25" fill="none" stroke="#505050" stroke-width="1" stroke-dasharray="1 1"/>
<path d="M24.5 396.5h6l1 1.5h5.5v9.5h-12.5z" fill="url(#fg)" stroke="#c48a1c" stroke-width="1"/><path d="M25 399h11.5" stroke="#fff3c0" stroke-width="1"/>
<path d="M40.1 404.3 L38.6 405.6 L39.0 407.6 L37.0 407.8 L36.2 409.6 L34.5 408.6 L32.8 409.6 L32.0 407.8 L30.0 407.6 L30.4 405.6 L28.9 404.3 L30.4 403.0 L30.0 401.0 L32.0 400.8 L32.8 399.0 L34.5 400.0 L36.2 399.0 L37.0 400.8 L39.0 401.0 L38.6 403.0Z" fill="url(#gg)" stroke="#901808" stroke-width="0.6"/>
<path d="M18 418.5H25" fill="none" stroke="#505050" stroke-width="1" stroke-dasharray="1 1"/>
<rect x="9.5" y="413.5" width="8" height="8" fill="#f4f4f4" stroke="#a4a4a4"/>
<path d="M11.5 418.5h4" stroke="#405070" stroke-width="1"/>
<path d="M13.5 416.5v4" stroke="#405070" stroke-width="1"/>
<path d="M24.5 412.5h6l1 1.5h5.5v9.5h-12.5z" fill="url(#fg)" stroke="#c48a1c" stroke-width="1"/><path d="M25 415h11.5" stroke="#fff3c0" stroke-width="1"/>
<path d="M40.1 420.3 L38.6 421.6 L39.0 423.6 L37.0 423.8 L36.2 425.6 L34.5 424.6 L32.8 425.6 L32.0 423.8 L30.0 423.6 L30.4 421.6 L28.9 420.3 L30.4 419.0 L30.0 417.0 L32.0 416.8 L32.8 415.0 L34.5 416.0 L36.2 415.0 L37.0 416.8 L39.0 417.0 L38.6 419.0Z" fill="url(#gg)" stroke="#901808" stroke-width="0.6"/>
<path d="M18 434.5H25" fill="none" stroke="#505050" stroke-width="1" stroke-dasharray="1 1"/>
<rect x="9.5" y="429.5" width="8" height="8" fill="#f4f4f4" stroke="#a4a4a4"/>
<path d="M11.5 434.5h4" stroke="#405070" stroke-width="1"/>
<path d="M13.5 432.5v4" stroke="#405070" stroke-width="1"/>
<path d="M24.5 428.5h6l1 1.5h5.5v9.5h-12.5z" fill="url(#fg)" stroke="#c48a1c" stroke-width="1"/><path d="M25 431h11.5" stroke="#fff3c0" stroke-width="1"/>
<path d="M40.1 436.3 L38.6 437.6 L39.0 439.6 L37.0 439.8 L36.2 441.6 L34.5 440.6 L32.8 441.6 L32.0 439.8 L30.0 439.6 L30.4 437.6 L28.9 436.3 L30.4 435.0 L30.0 433.0 L32.0 432.8 L32.8 431.0 L34.5 432.0 L36.2 431.0 L37.0 432.8 L39.0 433.0 L38.6 435.0Z" fill="url(#gg)" stroke="#901808" stroke-width="0.6"/>
<path d="M15 450.5H25" fill="none" stroke="#505050" stroke-width="1" stroke-dasharray="1 1"/>
<path d="M24.5 444.5h6l1 1.5h5.5v9.5h-12.5z" fill="url(#fg)" stroke="#c48a1c" stroke-width="1"/><path d="M25 447h11.5" stroke="#fff3c0" stroke-width="1"/>
<path d="M40.1 452.3 L38.6 453.6 L39.0 455.6 L37.0 455.8 L36.2 457.6 L34.5 456.6 L32.8 457.6 L32.0 455.8 L30.0 455.6 L30.4 453.6 L28.9 452.3 L30.4 451.0 L30.0 449.0 L32.0 448.8 L32.8 447.0 L34.5 448.0 L36.2 447.0 L37.0 448.8 L39.0 449.0 L38.6 451.0Z" fill="url(#gg)" stroke="#901808" stroke-width="0.6"/>
<path d="M15 466.5H25" fill="none" stroke="#505050" stroke-width="1" stroke-dasharray="1 1"/>
<path d="M24.5 460.5h6l1 1.5h5.5v9.5h-12.5z" fill="url(#fg)" stroke="#c48a1c" stroke-width="1"/><path d="M25 463h11.5" stroke="#fff3c0" stroke-width="1"/>
<path d="M40.1 468.3 L38.6 469.6 L39.0 471.6 L37.0 471.8 L36.2 473.6 L34.5 472.6 L32.8 473.6 L32.0 471.8 L30.0 471.6 L30.4 469.6 L28.9 468.3 L30.4 467.0 L30.0 465.0 L32.0 464.8 L32.8 463.0 L34.5 464.0 L36.2 463.0 L37.0 464.8 L39.0 465.0 L38.6 467.0Z" fill="url(#gg)" stroke="#901808" stroke-width="0.6"/>
<path d="M18 482.5H25" fill="none" stroke="#505050" stroke-width="1" stroke-dasharray="1 1"/>
<rect x="9.5" y="477.5" width="8" height="8" fill="#f4f4f4" stroke="#a4a4a4"/>
<path d="M11.5 482.5h4" stroke="#405070" stroke-width="1"/>
<path d="M13.5 480.5v4" stroke="#405070" stroke-width="1"/>
<path d="M24.5 476.5h6l1 1.5h5.5v9.5h-12.5z" fill="url(#fg)" stroke="#c48a1c" stroke-width="1"/><path d="M25 479h11.5" stroke="#fff3c0" stroke-width="1"/>
<path d="M40.1 484.3 L38.6 485.6 L39.0 487.6 L37.0 487.8 L36.2 489.6 L34.5 488.6 L32.8 489.6 L32.0 487.8 L30.0 487.6 L30.4 485.6 L28.9 484.3 L30.4 483.0 L30.0 481.0 L32.0 480.8 L32.8 479.0 L34.5 480.0 L36.2 479.0 L37.0 480.8 L39.0 481.0 L38.6 483.0Z" fill="url(#gg)" stroke="#901808" stroke-width="0.6"/>
<path d="M15 498.5H25" fill="none" stroke="#505050" stroke-width="1" stroke-dasharray="1 1"/>
<path d="M25.5 492.5h6l1 1.5h5.5v9.5h-12.5z" fill="url(#fg)" stroke="#c48a1c" stroke-width="1"/><path d="M26 495h11.5" stroke="#fff3c0" stroke-width="1"/>
<path d="M30 496.0q2.5 2 5 0t5 0" fill="none" stroke="#6058b0" stroke-width="1.1"/>
<path d="M30 498.7q2.5 2 5 0t5 0" fill="none" stroke="#6058b0" stroke-width="1.1"/>
<path d="M30 501.4q2.5 2 5 0t5 0" fill="none" stroke="#6058b0" stroke-width="1.1"/>
<path d="M15 514.5H25" fill="none" stroke="#505050" stroke-width="1" stroke-dasharray="1 1"/>
<path d="M25.5 508.5h6l1 1.5h5.5v9.5h-12.5z" fill="url(#fg)" stroke="#c48a1c" stroke-width="1"/><path d="M26 511h11.5" stroke="#fff3c0" stroke-width="1"/>
<path d="M30 512.0q2.5 2 5 0t5 0" fill="none" stroke="#6058b0" stroke-width="1.1"/>
<path d="M30 514.7q2.5 2 5 0t5 0" fill="none" stroke="#6058b0" stroke-width="1.1"/>
<path d="M30 517.4q2.5 2 5 0t5 0" fill="none" stroke="#6058b0" stroke-width="1.1"/>
<path d="M15 530.5H25" fill="none" stroke="#505050" stroke-width="1" stroke-dasharray="1 1"/>
<path d="M25.5 524.5h6l1 1.5h5.5v9.5h-12.5z" fill="url(#fg)" stroke="#c48a1c" stroke-width="1"/><path d="M26 527h11.5" stroke="#fff3c0" stroke-width="1"/>
<path d="M30 528.0q2.5 2 5 0t5 0" fill="none" stroke="#6058b0" stroke-width="1.1"/>
<path d="M30 530.7q2.5 2 5 0t5 0" fill="none" stroke="#6058b0" stroke-width="1.1"/>
<path d="M30 533.4q2.5 2 5 0t5 0" fill="none" stroke="#6058b0" stroke-width="1.1"/>
<path d="M15 546.5H25" fill="none" stroke="#505050" stroke-width="1" stroke-dasharray="1 1"/>
<path d="M25.5 540.5h6l1 1.5h5.5v9.5h-12.5z" fill="url(#fg)" stroke="#c48a1c" stroke-width="1"/><path d="M26 543h11.5" stroke="#fff3c0" stroke-width="1"/>
<path d="M30 544.0q2.5 2 5 0t5 0" fill="none" stroke="#6058b0" stroke-width="1.1"/>
<path d="M30 546.7q2.5 2 5 0t5 0" fill="none" stroke="#6058b0" stroke-width="1.1"/>
<path d="M30 549.4q2.5 2 5 0t5 0" fill="none" stroke="#6058b0" stroke-width="1.1"/>
<path d="M15 562.5H25" fill="none" stroke="#505050" stroke-width="1" stroke-dasharray="1 1"/>
<path d="M25.5 556.5h6l1 1.5h5.5v9.5h-12.5z" fill="url(#fg)" stroke="#c48a1c" stroke-width="1"/><path d="M26 559h11.5" stroke="#fff3c0" stroke-width="1"/>
<path d="M30 560.0q2.5 2 5 0t5 0" fill="none" stroke="#6058b0" stroke-width="1.1"/>
<path d="M30 562.7q2.5 2 5 0t5 0" fill="none" stroke="#6058b0" stroke-width="1.1"/>
<path d="M30 565.4q2.5 2 5 0t5 0" fill="none" stroke="#6058b0" stroke-width="1.1"/>
</svg>
<div class="a" style="left:91px;top:170px;width:48px;height:16px;background:#c9c9c9"></div>
<div class="t" style="left:45.5px;top:141px;font-size:12px;line-height:13px;color:#000000;font-family:'Liberation Sans',sans-serif;letter-spacing:0.1px">Components</div>
<div class="t" style="left:64px;top:157px;font-size:12px;line-height:13px;color:#000000;font-family:'Liberation Sans',sans-serif;letter-spacing:0.1px">Log_Spiral</div>
<div class="t" style="left:93px;top:173px;font-size:12px;line-height:13px;color:#000000;font-family:'Liberation Sans',sans-serif;letter-spacing:0.1px">Log_coil</div>
<div class="t" style="left:45.5px;top:189px;font-size:12px;line-height:13px;color:#000000;font-family:'Liberation Sans',sans-serif;letter-spacing:0.1px">Groups</div>
<div class="t" style="left:45.5px;top:205px;font-size:12px;line-height:13px;color:#000000;font-family:'Liberation Sans',sans-serif;letter-spacing:0.1px">Materials</div>
<div class="t" style="left:45.5px;top:221px;font-size:12px;line-height:13px;color:#000000;font-family:'Liberation Sans',sans-serif;letter-spacing:0.1px">Faces</div>
<div class="t" style="left:45.5px;top:237px;font-size:12px;line-height:13px;color:#000000;font-family:'Liberation Sans',sans-serif;letter-spacing:0.1px">Curves</div>
<div class="t" style="left:45.5px;top:253px;font-size:12px;line-height:13px;color:#000000;font-family:'Liberation Sans',sans-serif;letter-spacing:0.1px">WCS</div>
<div class="t" style="left:45.5px;top:269px;font-size:12px;line-height:13px;color:#000000;font-family:'Liberation Sans',sans-serif;letter-spacing:0.1px">Anchor Points</div>
<div class="t" style="left:45.5px;top:285px;font-size:12px;line-height:13px;color:#000000;font-family:'Liberation Sans',sans-serif;letter-spacing:0.1px">Wires</div>
<div class="t" style="left:45.5px;top:301px;font-size:12px;line-height:13px;color:#000000;font-family:'Liberation Sans',sans-serif;letter-spacing:0.1px">Voxel Data</div>
<div class="t" style="left:45.5px;top:317px;font-size:12px;line-height:13px;color:#000000;font-family:'Liberation Sans',sans-serif;letter-spacing:0.1px">Dimensions</div>
<div class="t" style="left:45.5px;top:333px;font-size:12px;line-height:13px;color:#000000;font-family:'Liberation Sans',sans-serif;letter-spacing:0.1px">Lumped Elements</div>
<div class="t" style="left:45.5px;top:349px;font-size:12px;line-height:13px;color:#000000;font-family:'Liberation Sans',sans-serif;letter-spacing:0.1px">Plane Wave</div>
<div class="t" style="left:45.5px;top:365px;font-size:12px;line-height:13px;color:#000000;font-family:'Liberation Sans',sans-serif;letter-spacing:0.1px">Farfield Source</div>
<div class="t" style="left:45.5px;top:381px;font-size:12px;line-height:13px;color:#000000;font-family:'Liberation Sans',sans-serif;letter-spacing:0.1px">Field Sources</div>
<div class="t" style="left:45.5px;top:397px;font-size:12px;line-height:13px;color:#000000;font-family:'Liberation Sans',sans-serif;letter-spacing:0.1px">Ports</div>
<div class="t" style="left:45.5px;top:413px;font-size:12px;line-height:13px;color:#000000;font-family:'Liberation Sans',sans-serif;letter-spacing:0.1px">Excitation Signals</div>
<div class="t" style="left:45.5px;top:429px;font-size:12px;line-height:13px;color:#000000;font-family:'Liberation Sans',sans-serif;letter-spacing:0.1px">Field Monitors</div>
<div class="t" style="left:45.5px;top:445px;font-size:12px;line-height:13px;color:#000000;font-family:'Liberation Sans',sans-serif;letter-spacing:0.1px">Voltage and Current Monitors</div>
<div class="t" style="left:45.5px;top:461px;font-size:12px;line-height:13px;color:#000000;font-family:'Liberation Sans',sans-serif;letter-spacing:0.1px">Probes</div>
<div class="t" style="left:45.5px;top:477px;font-size:12px;line-height:13px;color:#000000;font-family:'Liberation Sans',sans-serif;letter-spacing:0.1px">Mesh Control</div>
<div class="t" style="left:45.5px;top:493px;font-size:12px;line-height:13px;color:#000000;font-family:'Liberation Sans',sans-serif;letter-spacing:0.1px">1D Results</div>
<div class="t" style="left:45.5px;top:509px;font-size:12px;line-height:13px;color:#000000;font-family:'Liberation Sans',sans-serif;letter-spacing:0.1px">2D/3D Results</div>
<div class="t" style="left:45.5px;top:525px;font-size:12px;line-height:13px;color:#000000;font-family:'Liberation Sans',sans-serif;letter-spacing:0.1px">TLM Results</div>
<div class="t" style="left:45.5px;top:541px;font-size:12px;line-height:13px;color:#000000;font-family:'Liberation Sans',sans-serif;letter-spacing:0.1px">Farfields</div>
<div class="t" style="left:45.5px;top:557px;font-size:12px;line-height:13px;color:#000000;font-family:'Liberation Sans',sans-serif;letter-spacing:0.1px">Tables</div>
<div class="a" style="left:398px;top:115px;width:1px;height:750px;background:#f4f6fa"></div>
<div class="a" style="left:399px;top:115px;width:4px;height:750px;background:linear-gradient(#bcd6f8,#8fb2e4)"></div>
<div class="a" style="left:403px;top:115px;width:1004px;height:29px;background:#f6f6f6;border-bottom:1px solid #9fb3c7"></div>
<div class="a" style="left:403px;top:143px;width:1004px;height:1px;background:#a7bbcf"></div>
<div class="a" style="left:403px;top:144px;width:1004px;height:2px;background:#ffffff"></div>
<div class="a" style="left:403px;top:144px;width:4px;height:701px;background:#ffffff"></div>
<div class="a" style="left:405px;top:145px;width:1002px;height:2px;background:#62666c"></div>
<div class="a" style="left:405px;top:145px;width:2px;height:700px;background:#62666c"></div>
<svg style="left:407px;top:147px" width="1000" height="697" viewBox="407 147 1000 697">
<defs><linearGradient id="vg" x1="0" y1="0" x2="0" y2="1"><stop offset="0" stop-color="#a3a8b8"/><stop offset="0.37" stop-color="#c6c8d5"/><stop offset="0.71" stop-color="#e4e5ea"/><stop offset="1" stop-color="#fdfdfe"/></linearGradient></defs>
<rect x="407" y="147" width="1000" height="697" fill="url(#vg)"/>
<path d="M1071.3 422.6 L1071.3 422.8 L1071.2 423.1 L1071.2 423.4 L1071.2 423.6 L1071.1 423.9 L1071.1 424.1 L1071.1 424.4 L1071.1 424.7 L1071.2 425.0 L1071.2 425.2 L1071.2 425.5 L1071.3 425.8 L1071.4 426.1 L1071.5 426.3 L1071.6 426.6 L1071.7 426.9 L1071.8 427.2 L1071.9 427.4 L1072.0 427.7 L1072.2 428.0 L1072.4 428.2 L1072.5 428.5 L1072.7 428.8 L1072.9 429.0 L1073.1 429.3 L1073.4 429.5 L1073.6 429.7 L1073.9 429.9 L1074.1 430.2 L1074.4 430.4 L1074.7 430.6 L1075.0 430.8 L1075.3 431.0 L1075.6 431.1 L1075.9 431.3 L1076.2 431.4 L1076.6 431.6 L1076.9 431.7 L1077.3 431.8 L1077.6 431.9 L1078.0 432.0 L1078.4 432.1 L1078.8 432.2 L1079.2 432.2 L1079.6 432.3 L1080.0 432.3 L1080.4 432.3 L1080.8 432.3 L1081.2 432.3 L1081.6 432.2 L1082.1 432.2 L1082.5 432.1 L1082.9 432.0 L1083.3 431.9 L1083.8 431.8 L1084.2 431.6 L1084.6 431.5 L1085.0 431.3 L1085.4 431.1 L1085.8 430.9 L1086.2 430.7 L1086.6 430.4 L1087.0 430.2 L1087.4 429.9 L1087.8 429.6 L1088.2 429.3 L1088.5 429.0 L1088.9 428.6 L1089.2 428.2 L1089.5 427.9 L1089.9 427.5 L1090.2 427.1 L1090.5 426.6 L1090.7 426.2 L1091.0 425.7 L1091.2 425.3 L1091.5 424.8 L1091.7 424.3 L1091.9 423.8 L1092.0 423.3 L1092.2 422.7 L1092.3 422.2 L1092.4 421.6 L1092.5 421.1 L1092.6 420.5 L1092.6 419.9 L1092.7 419.4 L1092.7 418.8 L1092.7 418.2 L1092.6 417.6 L1092.5 417.0 L1092.4 416.4 L1092.3 415.8 L1092.2 415.1 L1092.0 414.5 L1091.8 413.9 L1091.6 413.3 L1091.3 412.7 L1091.1 412.1 L1090.8 411.5 L1090.4 410.9 L1090.1 410.4 L1089.7 409.8 L1089.3 409.2 L1088.8 408.7 L1088.4 408.1 L1087.9 407.6 L1087.4 407.1 L1086.8 406.6 L1086.3 406.1 L1085.7 405.6 L1085.1 405.2 L1084.4 404.8 L1083.8 404.4 L1083.1 404.0 L1082.4 403.6 L1081.7 403.3 L1080.9 402.9 L1080.2 402.7 L1079.4 402.4 L1078.6 402.2 L1077.8 401.9 L1076.9 401.8 L1076.1 401.6 L1075.2 401.5 L1074.4 401.4 L1073.5 401.3 L1072.6 401.3 L1071.7 401.3 L1070.8 401.4 L1069.8 401.5 L1068.9 401.6 L1068.0 401.7 L1067.1 401.9 L1066.1 402.1 L1065.2 402.4 L1064.3 402.7 L1063.4 403.0 L1062.4 403.4 L1061.5 403.8 L1060.6 404.3 L1059.7 404.7 L1058.9 405.3 L1058.0 405.8 L1057.1 406.4 L1056.3 407.1 L1055.5 407.8 L1054.7 408.5 L1053.9 409.2 L1053.2 410.0 L1052.4 410.8 L1051.7 411.7 L1051.1 412.6 L1050.4 413.5 L1049.8 414.5 L1049.2 415.5 L1048.7 416.5 L1048.2 417.5 L1047.7 418.6 L1047.3 419.7 L1046.9 420.9 L1046.5 422.0 L1046.2 423.2 L1046.0 424.4 L1045.8 425.6 L1045.6 426.9 L1045.5 428.1 L1045.4 429.4 L1045.4 430.7 L1045.4 432.0 L1045.5 433.3 L1045.6 434.6 L1045.8 436.0 L1046.1 437.3 L1046.4 438.6 L1046.8 440.0 L1047.2 441.3 L1047.7 442.6 L1048.2 444.0 L1048.8 445.3 L1049.4 446.6 L1050.1 447.9 L1050.9 449.2 L1051.7 450.4 L1052.6 451.7 L1053.6 452.9 L1054.6 454.1 L1055.6 455.2 L1056.7 456.4 L1057.9 457.5 L1059.1 458.5 L1060.4 459.6 L1061.7 460.6 L1063.1 461.5 L1064.6 462.4 L1066.0 463.3 L1067.6 464.1 L1069.1 464.9 L1070.8 465.6 L1072.4 466.2 L1074.1 466.8 L1075.9 467.4 L1077.7 467.8 L1079.5 468.2 L1081.3 468.6 L1083.2 468.9 L1085.1 469.1 L1087.1 469.2 L1089.0 469.3 L1091.0 469.3 L1093.0 469.2 L1095.0 469.1 L1097.0 468.8 L1099.1 468.5 L1101.1 468.1 L1103.1 467.7 L1105.2 467.1 L1107.2 466.5 L1109.2 465.8 L1111.2 465.0 L1113.2 464.1 L1115.2 463.1 L1117.2 462.1 L1119.1 460.9 L1121.0 459.7 L1122.9 458.4 L1124.8 457.0 L1126.6 455.5 L1128.3 454.0 L1130.1 452.4 L1131.7 450.7 L1133.3 448.9 L1134.9 447.0 L1136.4 445.1 L1137.8 443.0 L1139.2 441.0 L1140.5 438.8 L1141.7 436.6 L1142.8 434.3 L1143.8 431.9 L1144.8 429.5 L1145.7 427.0 L1146.5 424.5 L1147.2 421.9 L1147.8 419.3 L1148.3 416.6 L1148.7 413.9 L1148.9 411.1 L1149.1 408.3 L1149.2 405.5 L1149.1 402.7 L1149.0 399.8 L1148.7 396.9 L1148.3 394.0 L1147.8 391.1 L1147.1 388.1 L1146.4 385.2 L1145.5 382.3 L1144.5 379.3 L1143.3 376.4 L1142.0 373.5 L1140.6 370.7 L1139.1 367.8 L1137.5 365.0 L1135.7 362.2 L1133.8 359.5 L1131.7 356.8 L1129.6 354.2 L1127.3 351.6 L1124.9 349.1 L1122.3 346.7 L1119.7 344.3 L1116.9 342.0 L1114.0 339.8 L1111.0 337.7 L1107.9 335.7 L1104.7 333.8 L1101.3 332.0 L1097.9 330.3 L1094.4 328.7 L1090.7 327.2 L1087.0 325.9 L1083.2 324.7 L1079.3 323.6 L1075.4 322.6 L1071.3 321.8 L1067.2 321.2 L1063.0 320.7 L1058.8 320.3 L1054.5 320.1 L1050.2 320.1 L1045.8 320.2 L1041.4 320.5 L1037.0 321.0 L1032.5 321.6 L1028.0 322.4 L1023.6 323.4 L1019.1 324.6 L1014.6 326.0 L1010.2 327.5 L1005.7 329.2 L1001.3 331.1 L997.0 333.2 L992.6 335.4 L988.4 337.9 L984.2 340.5 L980.0 343.3 L975.9 346.3 L972.0 349.5 L968.1 352.8 L964.3 356.4 L960.6 360.1 L957.0 364.0 L953.6 368.0 L950.3 372.2 L947.1 376.6 L944.1 381.2 L941.2 385.9 L938.5 390.7 L936.0 395.7 L933.6 400.8 L931.5 406.1 L929.5 411.5 L927.7 417.0 L926.1 422.7 L924.8 428.4 L923.6 434.3 L922.7 440.2 L922.0 446.2 L921.6 452.4 L921.4 458.5 L921.4 464.8 L921.7 471.1 L922.3 477.4 L923.1 483.8 L924.2 490.2 L925.5 496.7 L927.1 503.1 L929.0 509.5 L931.2 515.9 L933.6 522.3 L936.3 528.7 L939.3 535.0 L942.6 541.3 L946.2 547.5 L950.0 553.6 L954.1 559.6 L958.5 565.5 L963.2 571.3 L968.2 577.0 L973.4 582.5 L978.9 587.9 L984.6 593.1 L990.7 598.2 L997.0 603.1 L1003.5 607.8 L1010.3 612.2 L1017.3 616.5 L1024.5 620.5 L1032.0 624.3 L1039.7 627.9 L1047.6 631.2 L1055.8 634.2 L1064.1 636.9 L1072.6 639.4 L1081.2 641.5 L1090.1 643.3 L1099.1 644.9 L1108.2 646.0 L1117.5 646.9 L1126.8 647.4 L1136.3 647.6 L1145.9 647.4 L1155.5 646.8 L1165.3 645.9 L1175.0 644.6 L1184.8 642.9 L1194.6 640.8 L1204.5 638.3 L1214.3 635.5 L1224.1 632.2 L1233.8 628.6 L1243.5 624.5 L1253.1 620.0 L1262.6 615.2 L1272.0 609.9 L1281.3 604.2 L1290.4 598.2 L1299.4 591.7 L1308.2 584.8 L1316.8 577.5 L1325.1 569.9 L1333.3 561.8 L1341.2 553.4 L1348.8 544.6 L1356.1 535.4 L1363.2 525.9 L1369.9 516.0 L1376.2 505.8 L1382.3 495.3 L1282.6 471.5 L1278.6 478.6 L1274.3 485.4 L1269.8 492.1 L1265.0 498.5 L1260.1 504.7 L1255.0 510.6 L1249.7 516.2 L1244.2 521.7 L1238.5 526.8 L1232.8 531.7 L1226.9 536.3 L1220.8 540.7 L1214.7 544.8 L1208.4 548.6 L1202.1 552.1 L1195.7 555.4 L1189.3 558.4 L1182.8 561.1 L1176.2 563.6 L1169.6 565.8 L1163.0 567.7 L1156.4 569.4 L1149.8 570.8 L1143.2 571.9 L1136.6 572.8 L1130.1 573.4 L1123.6 573.8 L1117.2 573.9 L1110.8 573.8 L1104.5 573.5 L1098.3 572.9 L1092.1 572.1 L1086.1 571.1 L1080.1 569.8 L1074.3 568.4 L1068.6 566.7 L1063.0 564.9 L1057.5 562.9 L1052.2 560.7 L1047.0 558.3 L1042.0 555.7 L1037.1 553.0 L1032.4 550.2 L1027.8 547.1 L1023.4 544.0 L1019.2 540.7 L1015.2 537.3 L1011.3 533.8 L1007.6 530.2 L1004.1 526.4 L1000.8 522.6 L997.6 518.7 L994.6 514.7 L991.9 510.7 L989.3 506.6 L986.9 502.4 L984.7 498.2 L982.7 494.0 L980.8 489.7 L979.2 485.4 L977.7 481.1 L976.5 476.7 L975.4 472.4 L974.5 468.1 L973.8 463.8 L973.2 459.5 L972.9 455.2 L972.7 451.0 L972.6 446.8 L972.8 442.6 L973.1 438.5 L973.5 434.4 L974.1 430.4 L974.9 426.5 L975.8 422.6 L976.9 418.8 L978.1 415.1 L979.4 411.5 L980.9 408.0 L982.4 404.5 L984.1 401.1 L986.0 397.9 L987.9 394.7 L989.9 391.7 L992.1 388.7 L994.3 385.9 L996.6 383.2 L999.0 380.6 L1001.5 378.1 L1004.0 375.7 L1006.6 373.4 L1009.3 371.3 L1012.1 369.3 L1014.8 367.4 L1017.7 365.6 L1020.5 364.0 L1023.5 362.4 L1026.4 361.0 L1029.4 359.8 L1032.3 358.6 L1035.3 357.6 L1038.3 356.7 L1041.3 355.9 L1044.4 355.2 L1047.4 354.7 L1050.4 354.3 L1053.3 353.9 L1056.3 353.7 L1059.2 353.7 L1062.2 353.7 L1065.0 353.8 L1067.9 354.0 L1070.7 354.4 L1073.5 354.8 L1076.2 355.4 L1078.8 356.0 L1081.5 356.7 L1084.0 357.5 L1086.5 358.4 L1089.0 359.4 L1091.3 360.5 L1093.7 361.6 L1095.9 362.9 L1098.1 364.2 L1100.2 365.5 L1102.2 366.9 L1104.1 368.4 L1106.0 369.9 L1107.8 371.5 L1109.5 373.2 L1111.1 374.9 L1112.6 376.6 L1114.1 378.4 L1115.5 380.2 L1116.8 382.0 L1118.0 383.9 L1119.1 385.8 L1120.1 387.7 L1121.0 389.6 L1121.9 391.5 L1122.7 393.5 L1123.3 395.5 L1123.9 397.4 L1124.5 399.4 L1124.9 401.4 L1125.2 403.4 L1125.5 405.3 L1125.7 407.3 L1125.8 409.2 L1125.8 411.1 L1125.8 413.0 L1125.7 414.9 L1125.5 416.8 L1125.2 418.6 L1124.9 420.4 L1124.5 422.1 L1124.0 423.9 L1123.5 425.6 L1122.9 427.3 L1122.2 428.9 L1121.5 430.5 L1120.8 432.0 L1120.0 433.5 L1119.1 434.9 L1118.2 436.4 L1117.2 437.7 L1116.2 439.0 L1115.2 440.3 L1114.1 441.5 L1113.0 442.6 L1111.8 443.7 L1110.6 444.8 L1109.4 445.7 L1108.2 446.7 L1106.9 447.6 L1105.6 448.4 L1104.3 449.1 L1103.0 449.8 L1101.7 450.5 L1100.3 451.1 L1099.0 451.6 L1097.6 452.1 L1096.2 452.5 L1094.9 452.9 L1093.5 453.2 L1092.1 453.5 L1090.8 453.7 L1089.4 453.9 L1088.0 454.0 L1086.7 454.0 L1085.4 454.0 L1084.0 454.0 L1082.7 453.9 L1081.5 453.7 L1080.2 453.5 L1079.0 453.3 L1077.7 453.0 L1076.5 452.7 L1075.4 452.3 L1074.2 451.9 L1073.1 451.5 L1072.0 451.0 L1070.9 450.5 L1069.9 450.0 L1068.9 449.4 L1068.0 448.8 L1067.0 448.1 L1066.1 447.5 L1065.3 446.8 L1064.4 446.0 L1063.7 445.3 L1062.9 444.5 L1062.2 443.8 L1061.5 443.0 L1060.9 442.1 L1060.3 441.3 L1059.7 440.5 L1059.2 439.6 L1058.7 438.7 L1058.3 437.9 L1057.9 437.0 L1057.6 436.1 L1057.2 435.2 L1056.9 434.3 L1056.7 433.4 L1056.5 432.5 L1056.3 431.6 L1056.2 430.7 L1056.1 429.8 L1056.0 428.9 L1056.0 428.0 L1056.0 427.2 L1056.1 426.3 L1056.2 425.5 L1056.3 424.6 L1056.4 423.8 L1056.6 423.0 L1056.8 422.2 L1057.0 421.4 L1057.3 420.7 L1057.6 419.9 L1057.9 419.2 L1058.2 418.5 L1058.6 417.8 L1059.0 417.1 L1059.4 416.5 L1059.8 415.9 L1060.3 415.3 L1060.8 414.7 L1061.2 414.1 L1061.8 413.6 L1062.3 413.1 L1062.8 412.6 L1063.4 412.2 L1063.9 411.7 L1064.5 411.3 L1065.1 410.9 L1065.7 410.6 L1066.3 410.3 L1066.9 410.0 L1067.5 409.7 L1068.1 409.4 L1068.7 409.2 L1069.4 409.0 L1070.0 408.8 L1070.6 408.7 L1071.2 408.6 L1071.9 408.5 L1072.5 408.4 L1073.1 408.3 L1073.7 408.3 L1074.3 408.3 L1074.9 408.3 L1075.5 408.3 L1076.1 408.4 L1076.7 408.5 L1077.2 408.6 L1077.8 408.7 L1078.4 408.8 L1078.9 409.0 L1079.4 409.2 L1079.9 409.4 L1080.4 409.6 L1080.9 409.8 L1081.4 410.1 L1081.8 410.3 L1082.3 410.6 L1082.7 410.9 L1083.1 411.2 L1083.5 411.5 L1083.9 411.8 L1084.3 412.2 L1084.6 412.5 L1084.9 412.9 L1085.2 413.2 L1085.5 413.6 L1085.8 414.0 L1086.1 414.4 L1086.3 414.8 L1086.5 415.2 L1086.7 415.6 L1086.9 416.0 L1087.1 416.4 L1087.2 416.8 L1087.4 417.2 L1087.5 417.6 L1087.6 418.0 L1087.7 418.4 L1087.7 418.8 L1087.8 419.2 L1087.8 419.6 L1087.8 420.0 L1087.8 420.4 L1087.8 420.8 L1087.8 421.2 L1087.7 421.6 L1087.7 422.0 L1087.6 422.3 L1087.5 422.7 L1087.4 423.0 L1087.3 423.4 L1087.2 423.7 L1087.0 424.1 L1086.9 424.4 L1086.7 424.7 L1086.5 425.0 L1086.3 425.3 L1086.1 425.6 L1085.9 425.9 L1085.7 426.1 L1085.5 426.4 L1085.3 426.6 L1085.0 426.9 L1084.8 427.1 L1084.5 427.3 L1084.3 427.5 L1084.0 427.7 L1083.8 427.9 L1083.5 428.0 L1083.2 428.2 L1083.0 428.3 L1082.7 428.5 L1082.4 428.6 L1082.1 428.7 L1081.8 428.8 L1081.5 428.9 L1081.3 428.9 L1081.0 429.0 L1080.7 429.0 L1080.4 429.1 L1080.1 429.1 L1079.8 429.1 L1079.6 429.1 L1079.3 429.1 L1079.0 429.1 L1078.8 429.1 L1078.5 429.0 L1078.2 429.0 L1078.0 428.9 L1077.7 428.9 L1077.5 428.8 L1077.2 428.7 L1077.0 428.6 L1076.8 428.6 L1076.5 428.4 L1076.3 428.3 L1076.1 428.2 L1075.9 428.1 L1075.7 428.0 L1075.5 427.8 L1075.3 427.7 L1075.2 427.5 L1075.0 427.4 L1074.8 427.2 L1074.7 427.1 L1074.5 426.9 L1074.4 426.7 L1074.3 426.6 L1074.2 426.4 L1074.1 426.2 L1074.0 426.0 L1073.9 425.9 L1073.8 425.7 L1073.7 425.5 L1073.6 425.3 L1073.6 425.1 L1073.5 424.9 L1073.5 424.7 L1073.4 424.6 L1073.4 424.4 L1073.4 424.2 L1073.3 424.0 L1073.3 423.8 L1073.3 423.6 L1073.3 423.5 L1073.4 423.3 L1073.4 423.1 L1073.4 422.9 L1073.4 422.8 L1073.5 422.6Z" fill="#aaaaa5" stroke="#1e1e1e" stroke-width="0.9" stroke-linejoin="round"/>
<path d="M828.5 147.3L1271 252.6L1196.5 547.8L754 442.5Z" fill="none" stroke="#f08a5a" stroke-width="1"/>
<path d="M1049.7 200L975.2 495.1M791.2 294.9L1233.8 400.2" fill="none" stroke="#f08a5a" stroke-width="1" stroke-dasharray="5 4"/>
<path d="M1084.4 422.6 L1084.5 422.4 L1084.5 422.1 L1084.6 421.8 L1084.6 421.6 L1084.6 421.3 L1084.6 421.1 L1084.6 420.8 L1084.6 420.5 L1084.6 420.2 L1084.5 420.0 L1084.5 419.7 L1084.4 419.4 L1084.4 419.1 L1084.3 418.9 L1084.2 418.6 L1084.1 418.3 L1084.0 418.0 L1083.8 417.8 L1083.7 417.5 L1083.6 417.2 L1083.4 417.0 L1083.2 416.7 L1083.0 416.4 L1082.8 416.2 L1082.6 415.9 L1082.4 415.7 L1082.1 415.5 L1081.9 415.3 L1081.6 415.0 L1081.4 414.8 L1081.1 414.6 L1080.8 414.4 L1080.5 414.2 L1080.2 414.1 L1079.9 413.9 L1079.5 413.8 L1079.2 413.6 L1078.8 413.5 L1078.5 413.4 L1078.1 413.3 L1077.7 413.2 L1077.4 413.1 L1077.0 413.0 L1076.6 413.0 L1076.2 412.9 L1075.8 412.9 L1075.4 412.9 L1074.9 412.9 L1074.5 412.9 L1074.1 413.0 L1073.7 413.0 L1073.3 413.1 L1072.8 413.2 L1072.4 413.3 L1072.0 413.4 L1071.6 413.6 L1071.2 413.7 L1070.7 413.9 L1070.3 414.1 L1069.9 414.3 L1069.5 414.5 L1069.1 414.8 L1068.7 415.0 L1068.3 415.3 L1068.0 415.6 L1067.6 415.9 L1067.2 416.2 L1066.9 416.6 L1066.5 417.0 L1066.2 417.3 L1065.9 417.7 L1065.6 418.1 L1065.3 418.6 L1065.0 419.0 L1064.8 419.5 L1064.5 419.9 L1064.3 420.4 L1064.1 420.9 L1063.9 421.4 L1063.7 421.9 L1063.6 422.5 L1063.4 423.0 L1063.3 423.6 L1063.2 424.1 L1063.1 424.7 L1063.1 425.3 L1063.1 425.8 L1063.1 426.4 L1063.1 427.0 L1063.1 427.6 L1063.2 428.2 L1063.3 428.8 L1063.4 429.4 L1063.6 430.1 L1063.7 430.7 L1063.9 431.3 L1064.2 431.9 L1064.4 432.5 L1064.7 433.1 L1065.0 433.7 L1065.3 434.3 L1065.7 434.8 L1066.1 435.4 L1066.5 436.0 L1066.9 436.5 L1067.4 437.1 L1067.9 437.6 L1068.4 438.1 L1068.9 438.6 L1069.5 439.1 L1070.1 439.6 L1070.7 440.0 L1071.3 440.4 L1072.0 440.8 L1072.7 441.2 L1073.4 441.6 L1074.1 441.9 L1074.8 442.3 L1075.6 442.5 L1076.4 442.8 L1077.2 443.0 L1078.0 443.3 L1078.8 443.4 L1079.7 443.6 L1080.5 443.7 L1081.4 443.8 L1082.3 443.9 L1083.2 443.9 L1084.1 443.9 L1085.0 443.8 L1085.9 443.7 L1086.8 443.6 L1087.8 443.5 L1088.7 443.3 L1089.6 443.1 L1090.5 442.8 L1091.5 442.5 L1092.4 442.2 L1093.3 441.8 L1094.2 441.4 L1095.1 440.9 L1096.0 440.5 L1096.9 439.9 L1097.8 439.4 L1098.6 438.8 L1099.4 438.1 L1100.3 437.4 L1101.1 436.7 L1101.8 436.0 L1102.6 435.2 L1103.3 434.4 L1104.0 433.5 L1104.7 432.6 L1105.3 431.7 L1105.9 430.7 L1106.5 429.7 L1107.1 428.7 L1107.6 427.7 L1108.0 426.6 L1108.5 425.5 L1108.9 424.3 L1109.2 423.2 L1109.5 422.0 L1109.8 420.8 L1110.0 419.6 L1110.2 418.3 L1110.3 417.1 L1110.3 415.8 L1110.4 414.5 L1110.3 413.2 L1110.2 411.9 L1110.1 410.6 L1109.9 409.2 L1109.7 407.9 L1109.3 406.6 L1109.0 405.2 L1108.6 403.9 L1108.1 402.6 L1107.6 401.2 L1107.0 399.9 L1106.3 398.6 L1105.6 397.3 L1104.8 396.0 L1104.0 394.8 L1103.1 393.5 L1102.2 392.3 L1101.2 391.1 L1100.1 390.0 L1099.0 388.8 L1097.8 387.7 L1096.6 386.7 L1095.3 385.6 L1094.0 384.6 L1092.6 383.7 L1091.2 382.8 L1089.7 381.9 L1088.2 381.1 L1086.6 380.3 L1085.0 379.6 L1083.3 379.0 L1081.6 378.4 L1079.9 377.8 L1078.1 377.4 L1076.3 377.0 L1074.4 376.6 L1072.5 376.3 L1070.6 376.1 L1068.7 376.0 L1066.7 375.9 L1064.8 375.9 L1062.8 376.0 L1060.8 376.1 L1058.7 376.4 L1056.7 376.7 L1054.7 377.1 L1052.6 377.5 L1050.6 378.1 L1048.5 378.7 L1046.5 379.4 L1044.5 380.2 L1042.5 381.1 L1040.5 382.1 L1038.6 383.1 L1036.6 384.3 L1034.7 385.5 L1032.8 386.8 L1031.0 388.2 L1029.2 389.7 L1027.4 391.2 L1025.7 392.8 L1024.0 394.5 L1022.4 396.3 L1020.9 398.2 L1019.4 400.1 L1017.9 402.2 L1016.6 404.2 L1015.3 406.4 L1014.1 408.6 L1013.0 410.9 L1011.9 413.3 L1010.9 415.7 L1010.1 418.2 L1009.3 420.7 L1008.6 423.3 L1008.0 425.9 L1007.5 428.6 L1007.1 431.3 L1006.8 434.1 L1006.6 436.9 L1006.6 439.7 L1006.6 442.5 L1006.8 445.4 L1007.1 448.3 L1007.5 451.2 L1008.0 454.1 L1008.6 457.1 L1009.4 460.0 L1010.3 462.9 L1011.3 465.9 L1012.4 468.8 L1013.7 471.7 L1015.1 474.5 L1016.6 477.4 L1018.3 480.2 L1020.1 483.0 L1022.0 485.7 L1024.0 488.4 L1026.2 491.0 L1028.5 493.6 L1030.9 496.1 L1033.4 498.5 L1036.1 500.9 L1038.8 503.2 L1041.7 505.4 L1044.7 507.5 L1047.9 509.5 L1051.1 511.4 L1054.4 513.2 L1057.8 514.9 L1061.4 516.5 L1065.0 518.0 L1068.7 519.3 L1072.5 520.5 L1076.4 521.6 L1080.4 522.6 L1084.4 523.4 L1088.6 524.0 L1092.7 524.5 L1097.0 524.9 L1101.2 525.1 L1105.6 525.1 L1110.0 525.0 L1114.4 524.7 L1118.8 524.2 L1123.2 523.6 L1127.7 522.8 L1132.2 521.8 L1136.7 520.6 L1141.1 519.2 L1145.6 517.7 L1150.0 516.0 L1154.4 514.1 L1158.8 512.0 L1163.1 509.8 L1167.4 507.3 L1171.6 504.7 L1175.7 501.9 L1179.8 498.9 L1183.8 495.7 L1187.7 492.4 L1191.5 488.8 L1195.1 485.1 L1198.7 481.2 L1202.2 477.2 L1205.5 473.0 L1208.6 468.6 L1211.7 464.0 L1214.5 459.3 L1217.2 454.5 L1219.8 449.5 L1222.1 444.4 L1224.3 439.1 L1226.3 433.7 L1228.0 428.2 L1229.6 422.5 L1231.0 416.8 L1232.1 410.9 L1233.0 405.0 L1233.7 399.0 L1234.1 392.8 L1234.4 386.7 L1234.3 380.4 L1234.0 374.1 L1233.5 367.8 L1232.7 361.4 L1231.6 355.0 L1230.2 348.5 L1228.6 342.1 L1226.7 335.7 L1224.6 329.3 L1222.1 322.9 L1219.4 316.5 L1216.4 310.2 L1213.1 303.9 L1209.6 297.7 L1205.7 291.6 L1201.6 285.6 L1197.2 279.7 L1192.5 273.9 L1187.6 268.2 L1182.4 262.7 L1176.9 257.3 L1171.1 252.1 L1165.1 247.0 L1158.8 242.1 L1152.3 237.4 L1145.5 233.0 L1138.5 228.7 L1131.2 224.7 L1123.7 220.9 L1116.0 217.3 L1108.1 214.0 L1100.0 211.0 L1091.7 208.3 L1083.2 205.8 L1074.5 203.7 L1065.7 201.9 L1056.7 200.3 L1047.6 199.2 L1038.3 198.3 L1028.9 197.8 L1019.4 197.6 L1009.9 197.8 L1000.2 198.4 L990.5 199.3 L980.7 200.6 L970.9 202.3 L961.1 204.4 L951.3 206.9 L941.5 209.7 L931.7 213.0 L921.9 216.6 L912.3 220.7 L902.7 225.2 L893.1 230.0 L883.7 235.3 L874.5 241.0 L865.3 247.0 L856.4 253.5 L847.6 260.4 L839.0 267.7 L830.6 275.3 L822.5 283.4 L814.6 291.8 L807.0 300.6 L799.6 309.8 L792.6 319.3 L785.9 329.2 L779.5 339.4 L773.5 349.9 L873.1 373.7 L877.2 366.6 L881.5 359.8 L886.0 353.1 L890.7 346.7 L895.7 340.5 L900.8 334.6 L906.1 329.0 L911.6 323.5 L917.2 318.4 L923.0 313.5 L928.9 308.9 L934.9 304.5 L941.1 300.4 L947.3 296.6 L953.6 293.1 L960.0 289.8 L966.5 286.8 L973.0 284.1 L979.6 281.6 L986.1 279.4 L992.7 277.5 L999.3 275.8 L1005.9 274.4 L1012.5 273.3 L1019.1 272.4 L1025.6 271.8 L1032.1 271.4 L1038.6 271.3 L1044.9 271.4 L1051.3 271.7 L1057.5 272.3 L1063.6 273.1 L1069.7 274.1 L1075.6 275.4 L1081.4 276.8 L1087.2 278.5 L1092.7 280.3 L1098.2 282.3 L1103.5 284.5 L1108.7 286.9 L1113.7 289.5 L1118.6 292.2 L1123.3 295.0 L1127.9 298.1 L1132.3 301.2 L1136.5 304.5 L1140.6 307.9 L1144.5 311.4 L1148.2 315.0 L1151.7 318.8 L1155.0 322.6 L1158.1 326.5 L1161.1 330.5 L1163.9 334.5 L1166.5 338.6 L1168.9 342.8 L1171.1 347.0 L1173.1 351.2 L1174.9 355.5 L1176.5 359.8 L1178.0 364.1 L1179.3 368.5 L1180.4 372.8 L1181.3 377.1 L1182.0 381.4 L1182.5 385.7 L1182.9 390.0 L1183.1 394.2 L1183.1 398.4 L1183.0 402.6 L1182.7 406.7 L1182.2 410.8 L1181.6 414.8 L1180.8 418.7 L1179.9 422.6 L1178.9 426.4 L1177.7 430.1 L1176.3 433.7 L1174.9 437.2 L1173.3 440.7 L1171.6 444.1 L1169.8 447.3 L1167.9 450.5 L1165.8 453.5 L1163.7 456.5 L1161.5 459.3 L1159.2 462.0 L1156.8 464.6 L1154.3 467.1 L1151.7 469.5 L1149.1 471.8 L1146.4 473.9 L1143.7 475.9 L1140.9 477.8 L1138.1 479.6 L1135.2 481.2 L1132.3 482.8 L1129.4 484.2 L1126.4 485.4 L1123.4 486.6 L1120.4 487.6 L1117.4 488.5 L1114.4 489.3 L1111.4 490.0 L1108.4 490.5 L1105.4 490.9 L1102.4 491.3 L1099.4 491.5 L1096.5 491.5 L1093.6 491.5 L1090.7 491.4 L1087.9 491.2 L1085.1 490.8 L1082.3 490.4 L1079.6 489.8 L1076.9 489.2 L1074.3 488.5 L1071.7 487.7 L1069.2 486.8 L1066.8 485.8 L1064.4 484.7 L1062.1 483.6 L1059.9 482.3 L1057.7 481.0 L1055.6 479.7 L1053.6 478.3 L1051.6 476.8 L1049.8 475.3 L1048.0 473.7 L1046.3 472.0 L1044.6 470.3 L1043.1 468.6 L1041.6 466.8 L1040.3 465.0 L1039.0 463.2 L1037.8 461.3 L1036.7 459.4 L1035.7 457.5 L1034.7 455.6 L1033.9 453.7 L1033.1 451.7 L1032.4 449.7 L1031.8 447.8 L1031.3 445.8 L1030.9 443.8 L1030.5 441.8 L1030.2 439.9 L1030.1 437.9 L1029.9 436.0 L1029.9 434.1 L1030.0 432.2 L1030.1 430.3 L1030.3 428.4 L1030.5 426.6 L1030.9 424.8 L1031.3 423.1 L1031.7 421.3 L1032.3 419.6 L1032.8 417.9 L1033.5 416.3 L1034.2 414.7 L1035.0 413.2 L1035.8 411.7 L1036.7 410.3 L1037.6 408.8 L1038.5 407.5 L1039.5 406.2 L1040.6 404.9 L1041.7 403.7 L1042.8 402.6 L1043.9 401.5 L1045.1 400.4 L1046.3 399.5 L1047.6 398.5 L1048.8 397.6 L1050.1 396.8 L1051.4 396.1 L1052.7 395.4 L1054.1 394.7 L1055.4 394.1 L1056.8 393.6 L1058.2 393.1 L1059.5 392.7 L1060.9 392.3 L1062.3 392.0 L1063.6 391.7 L1065.0 391.5 L1066.4 391.3 L1067.7 391.2 L1069.1 391.2 L1070.4 391.2 L1071.7 391.2 L1073.0 391.3 L1074.3 391.5 L1075.6 391.7 L1076.8 391.9 L1078.0 392.2 L1079.2 392.5 L1080.4 392.9 L1081.5 393.3 L1082.7 393.7 L1083.7 394.2 L1084.8 394.7 L1085.8 395.2 L1086.8 395.8 L1087.8 396.4 L1088.7 397.1 L1089.6 397.7 L1090.5 398.4 L1091.3 399.2 L1092.1 399.9 L1092.8 400.7 L1093.5 401.4 L1094.2 402.2 L1094.9 403.1 L1095.5 403.9 L1096.0 404.7 L1096.5 405.6 L1097.0 406.5 L1097.4 407.3 L1097.8 408.2 L1098.2 409.1 L1098.5 410.0 L1098.8 410.9 L1099.0 411.8 L1099.3 412.7 L1099.4 413.6 L1099.6 414.5 L1099.6 415.4 L1099.7 416.3 L1099.7 417.2 L1099.7 418.0 L1099.7 418.9 L1099.6 419.7 L1099.5 420.6 L1099.3 421.4 L1099.2 422.2 L1099.0 423.0 L1098.7 423.8 L1098.5 424.5 L1098.2 425.3 L1097.9 426.0 L1097.5 426.7 L1097.1 427.4 L1096.8 428.1 L1096.3 428.7 L1095.9 429.3 L1095.5 429.9 L1095.0 430.5 L1094.5 431.1 L1094.0 431.6 L1093.5 432.1 L1092.9 432.6 L1092.4 433.0 L1091.8 433.5 L1091.3 433.9 L1090.7 434.3 L1090.1 434.6 L1089.5 434.9 L1088.9 435.2 L1088.3 435.5 L1087.6 435.8 L1087.0 436.0 L1086.4 436.2 L1085.8 436.4 L1085.1 436.5 L1084.5 436.6 L1083.9 436.7 L1083.3 436.8 L1082.7 436.9 L1082.0 436.9 L1081.4 436.9 L1080.8 436.9 L1080.2 436.9 L1079.7 436.8 L1079.1 436.7 L1078.5 436.6 L1077.9 436.5 L1077.4 436.4 L1076.9 436.2 L1076.3 436.0 L1075.8 435.8 L1075.3 435.6 L1074.8 435.4 L1074.4 435.1 L1073.9 434.9 L1073.5 434.6 L1073.0 434.3 L1072.6 434.0 L1072.2 433.7 L1071.8 433.4 L1071.5 433.0 L1071.1 432.7 L1070.8 432.3 L1070.5 432.0 L1070.2 431.6 L1069.9 431.2 L1069.7 430.8 L1069.4 430.4 L1069.2 430.0 L1069.0 429.6 L1068.8 429.2 L1068.7 428.8 L1068.5 428.4 L1068.4 428.0 L1068.3 427.6 L1068.2 427.2 L1068.1 426.8 L1068.0 426.4 L1068.0 426.0 L1067.9 425.6 L1067.9 425.2 L1067.9 424.8 L1067.9 424.4 L1068.0 424.0 L1068.0 423.6 L1068.1 423.2 L1068.2 422.9 L1068.2 422.5 L1068.3 422.2 L1068.5 421.8 L1068.6 421.5 L1068.7 421.1 L1068.9 420.8 L1069.1 420.5 L1069.2 420.2 L1069.4 419.9 L1069.6 419.6 L1069.8 419.3 L1070.0 419.1 L1070.2 418.8 L1070.5 418.6 L1070.7 418.3 L1071.0 418.1 L1071.2 417.9 L1071.5 417.7 L1071.7 417.5 L1072.0 417.3 L1072.2 417.2 L1072.5 417.0 L1072.8 416.9 L1073.1 416.7 L1073.4 416.6 L1073.6 416.5 L1073.9 416.4 L1074.2 416.3 L1074.5 416.3 L1074.8 416.2 L1075.1 416.2 L1075.3 416.1 L1075.6 416.1 L1075.9 416.1 L1076.2 416.1 L1076.5 416.1 L1076.7 416.1 L1077.0 416.1 L1077.3 416.2 L1077.5 416.2 L1077.8 416.3 L1078.0 416.3 L1078.3 416.4 L1078.5 416.5 L1078.8 416.6 L1079.0 416.6 L1079.2 416.8 L1079.4 416.9 L1079.6 417.0 L1079.8 417.1 L1080.0 417.2 L1080.2 417.4 L1080.4 417.5 L1080.6 417.7 L1080.7 417.8 L1080.9 418.0 L1081.1 418.1 L1081.2 418.3 L1081.3 418.5 L1081.5 418.6 L1081.6 418.8 L1081.7 419.0 L1081.8 419.2 L1081.9 419.3 L1082.0 419.5 L1082.1 419.7 L1082.1 419.9 L1082.2 420.1 L1082.2 420.3 L1082.3 420.5 L1082.3 420.6 L1082.4 420.8 L1082.4 421.0 L1082.4 421.2 L1082.4 421.4 L1082.4 421.6 L1082.4 421.7 L1082.4 421.9 L1082.4 422.1 L1082.3 422.3 L1082.3 422.4 L1082.3 422.6Z" fill="none" stroke="#f27c3c" stroke-width="2.8" stroke-linejoin="miter"/>
<g transform="translate(1078,422)"><defs><radialGradient id="gw" r="0.5"><stop offset="0.6" stop-color="#fff4c0"/><stop offset="0.8" stop-color="#ecd890"/><stop offset="1" stop-color="#b89a58"/></radialGradient></defs><circle r="7" fill="#f27c3c"/><path d="M-3.5 2A4 4 0 1 1 2 3.5M-1 -1A1.6 1.6 0 1 1 1 0.5" fill="none" stroke="#1a1a1a" stroke-width="1.1"/><path d="M4 -13A13.5 13.5 0 1 1 -6 -12" fill="none" stroke="#a88a4c" stroke-width="6.5"/><path d="M4 -13A13.5 13.5 0 1 1 -6 -12" fill="none" stroke="#f2e4a4" stroke-width="4.5"/><path d="M4 -13A13.5 13.5 0 1 1 -6 -12" fill="none" stroke="#fffbe0" stroke-width="1.2" opacity="0.7"/><path d="M9 2A9 9 0 0 1 -8 5" fill="none" stroke="#a88a4c" stroke-width="4.5"/><path d="M9 2A9 9 0 0 1 -8 5" fill="none" stroke="#eedc98" stroke-width="3"/><path d="M-11 -20.5L5.5 -22L2 -10Z" fill="#d4b878" stroke="#a08848" stroke-width="0.6"/><path d="M-3 14L13 20.5L-1 23Z" fill="#dcc484" stroke="#a08848" stroke-width="0.6"/></g>
</svg>
<svg style="left:403px;top:115px" width="145" height="30" viewBox="403 115 145 30"><defs><linearGradient id="tg" x1="0" y1="0" x2="0" y2="1"><stop offset="0" stop-color="#fdeed8"/><stop offset="0.35" stop-color="#f9cf88"/><stop offset="0.55" stop-color="#f6b850"/><stop offset="1" stop-color="#fbdc98"/></linearGradient></defs><path d="M403.5 143.5V120Q403.5 116.5 407 116.5H525Q529 116.5 531 120L540 139Q542 143 546 143.5Z" fill="url(#tg)" stroke="#a89888" stroke-width="1"/><rect x="415" y="122" width="16" height="15" fill="#148c88"/><path d="M417.5 129.5q3.2-2.5 6.5 0t6.5 0M417.5 133.5q3.2-2.5 6.5 0t6.5 0" fill="none" stroke="#bff4f0" stroke-width="1.4"/><rect x="505.5" y="123.5" width="13" height="13" rx="2" fill="#e88060" stroke="#c85838"/><path d="M508.5 126.5L515.5 133.5M515.5 126.5L508.5 133.5" stroke="#fff" stroke-width="2"/></svg>
<div class="t" style="left:435px;top:125px;font-size:11px;line-height:12px;color:#000000;font-family:'Liberation Mono',monospace;letter-spacing:-0.6px">Untitled_0*</div>
<div class="a" style="left:407px;top:790px;width:162px;height:54px;background:#f2f2f2"></div>
<div class="t" style="left:437px;top:802px;font-size:10px;line-height:11px;color:#000000;font-family:'Liberation Sans',sans-serif;">Material</div>
<div class="t" style="left:516px;top:802px;font-size:10px;line-height:11px;color:#000000;font-family:'Liberation Sans',sans-serif;">PEC</div>
<div class="t" style="left:437px;top:816px;font-size:10px;line-height:11px;color:#000000;font-family:'Liberation Sans',sans-serif;">Type</div>
<div class="t" style="left:516px;top:816px;font-size:10px;line-height:11px;color:#000000;font-family:'Liberation Sans',sans-serif;">PEC</div>
<div class="t" style="left:437px;top:830px;font-size:10px;line-height:11px;color:#000000;font-family:'Liberation Sans',sans-serif;">Therm.cond.</div>
<div class="t" style="left:516px;top:830px;font-size:10px;line-height:11px;color:#000000;font-family:'Liberation Sans',sans-serif;">PTC</div>
<div class="a" style="left:403px;top:844px;width:1004px;height:21px;background:#ffffff"></div>
<div class="a" style="left:403px;top:844px;width:1004px;height:1px;background:#dedede"></div>
<div class="a" style="left:403px;top:845px;width:1004px;height:2px;background:#f0faff"></div>
<div class="a" style="left:403px;top:863px;width:1004px;height:2px;background:#b2c8e6"></div>
<svg style="left:403px;top:844px" width="1004" height="21" viewBox="403 844 1004 21"><defs><linearGradient id="bt" x1="0" y1="0" x2="0" y2="1"><stop offset="0" stop-color="#f6f9fd"/><stop offset="1" stop-color="#e4ecf7"/></linearGradient></defs><path d="M404.5 845V859Q404.5 862.5 408 862.5H497Q500.5 862.5 500.5 859V845Z" fill="url(#bt)"/><path d="M404.5 845V859Q404.5 862.5 408 862.5H497Q500.5 862.5 500.5 859V850Q500.5 847.5 503 847.5H1407" fill="none" stroke="#9aaac2" stroke-width="1"/></svg>
<div class="t" style="left:446px;top:851px;font-size:10px;line-height:11px;color:#13305a;font-family:'Liberation Mono',monospace;letter-spacing:0.5px">3D</div>
<div class="t" style="left:525px;top:851px;font-size:10px;line-height:11px;color:#13305a;font-family:'Liberation Mono',monospace;letter-spacing:0px">Schematic</div>
<svg style="left:1250px;top:810px" width="157" height="55" viewBox="1250 810 157 55">
<g fill="#d89aa4"><rect x="1257" y="815" width="22" height="12"/><rect x="1254" y="827" width="28" height="4"/><rect x="1259" y="831" width="21" height="10"/></g>
<g fill="#fbfbfc"><rect x="1261" y="818" width="14" height="2"/><rect x="1261" y="822" width="14" height="2"/><rect x="1263" y="833" width="4" height="5"/><rect x="1270" y="833" width="4" height="5"/></g>
<g fill="#d89aa4"><rect x="1285" y="816" width="6" height="6"/><rect x="1285" y="824" width="6" height="13"/><rect x="1283" y="836" width="27" height="5"/><rect x="1294" y="818" width="16" height="16"/></g>
<g fill="#fbfbfc"><rect x="1297" y="821" width="4" height="4"/><rect x="1304" y="821" width="3" height="4"/><rect x="1297" y="828" width="4" height="3"/><rect x="1304" y="828" width="3" height="3"/></g>
<g fill="#d89aa4"><rect x="1314" y="819" width="12" height="4"/><rect x="1317" y="814" width="5" height="27"/><rect x="1325" y="815" width="17" height="4"/><rect x="1327" y="822" width="15" height="19"/></g>
<g fill="#fbfbfc"><rect x="1331" y="827" width="7" height="8"/></g>
<g fill="#9cb4d4"><rect x="1346" y="820" width="10" height="4"/><rect x="1349" y="815" width="4" height="24"/><rect x="1345" y="836" width="10" height="4"/><rect x="1356" y="816" width="17" height="3"/><rect x="1355" y="822" width="19" height="3"/><rect x="1358" y="828" width="14" height="13"/></g>
<g fill="#fbfbfc"><rect x="1362" y="831" width="6" height="6"/></g>
<g fill="#9cb4d4"><rect x="1375" y="815" width="5" height="4"/><rect x="1378" y="821" width="5" height="19"/><rect x="1386" y="815" width="4" height="24"/><rect x="1392" y="815" width="3" height="24"/><rect x="1398" y="815" width="4" height="25"/></g>
<rect x="1254" y="843.5" width="149" height="1.2" fill="#909090"/>
<path transform="translate(1253.0,848)" d="M3 2v12M3 3h5v9h-5M3 6h5M3 9h5M1 13l7-3M10 5h7M14 1v13l-2-1M11 8l1 2" fill="none" stroke="#969696" stroke-width="1.9" stroke-linecap="square"/>
<path transform="translate(1269.9,848)" d="M2 3h6M5 1v5M1 6h7M3 8l-2 5M6 8q0 4-4 6M9 2h8M13 2l-1 2M10 4h6v7h-6zM10 7h6M11 11l-2 3M15 11l2 3" fill="none" stroke="#969696" stroke-width="1.9" stroke-linecap="square"/>
<path transform="translate(1286.8,848)" d="M2 3l6-1M1 6h8M5 3v11M5 7l-4 5M5 7l4 4M10 4h6v9h-6zM10 13h6" fill="none" stroke="#969696" stroke-width="1.9" stroke-linecap="square"/>
<path transform="translate(1303.7,848)" d="M2 3h14M1 7h16M9 1v6q-1 5-7 7M9 7q2 5 8 7" fill="none" stroke="#969696" stroke-width="1.9" stroke-linecap="square"/>
<path transform="translate(1320.6,848)" d="M5 1l-4 5h5l-5 6l6-2M1 14l6-2M9 5h7M9 8h8M12 1q1 9 5 13M16 9l-4 5M14 2l2 1" fill="none" stroke="#969696" stroke-width="1.9" stroke-linecap="square"/>
<path transform="translate(1337.5,848)" d="M2 2l2 2M1 6h3v7l2-2M9 2v4q0 1 2 1h3v-5M8 9h8q-2 4-8 5M10 10q3 3 7 4" fill="none" stroke="#969696" stroke-width="1.9" stroke-linecap="square"/>
<path transform="translate(1354.4,848)" d="M2 2l2 2M1 6h3v7l2-2M8 6h9M12.5 1v13" fill="none" stroke="#969696" stroke-width="1.9" stroke-linecap="square"/>
<path transform="translate(1371.3,848)" d="M3 3h12M9 1l-2 9h8l-4 4M2 7h14" fill="none" stroke="#969696" stroke-width="1.9" stroke-linecap="square"/>
<path transform="translate(1388.2,848)" d="M9 1v2M2 5v-2h14v2M4 6h10M8 6q-2 3-6 4M9 8l-5 5M9 9q0 4-2 5M12 9l4 4M5 11l8-4" fill="none" stroke="#969696" stroke-width="1.9" stroke-linecap="square"/>
</svg>
<div class="a" style="left:342px;top:276px;width:478px;height:522px;background:#d08787;border:1px solid #a86a6a"></div>
<div class="t" style="left:489px;top:283px;font-size:15.5px;line-height:17px;color:#403232;font-family:'Liberation Sans',sans-serif;">Transform Selected Object</div>
<div class="a" style="left:782px;top:277px;width:31px;height:20px;background:#c75050"></div>
<svg style="left:792px;top:281px" width="12" height="12"><path d="M1.5 1.5L10 10M10 1.5L1.5 10" stroke="#fff" stroke-width="1.8"/></svg>
<div class="a" style="left:349px;top:306px;width:464px;height:485px;background:#f0f0f0;border:1px solid #a67070;box-shadow:inset 1px 1px 0 #fcf6f6"></div>
<div class="a" style="left:362px;top:326px;width:140px;height:122px;border:1px solid #dcdcdc;border-radius:1px"></div>
<div class="a" style="left:368px;top:318px;width:60px;height:14px;background:#f0f0f0"></div>
<div class="t" style="left:371px;top:321px;font-size:12px;line-height:13px;color:#101010;font-family:'Liberation Sans',sans-serif;">Operation</div>
<svg style="left:381px;top:343.5px" width="15" height="15"><circle cx="7.5" cy="7.5" r="6" fill="#fff" stroke="#333" stroke-width="1"/></svg>
<div class="t" style="left:398px;top:345.5px;font-size:12px;line-height:13px;color:#101010;font-family:'Liberation Sans',sans-serif;">Translate</div>
<svg style="left:381px;top:370px" width="15" height="15"><circle cx="7.5" cy="7.5" r="6" fill="#fff" stroke="#333" stroke-width="1"/></svg>
<div class="t" style="left:398px;top:372px;font-size:12px;line-height:13px;color:#101010;font-family:'Liberation Sans',sans-serif;">Scale</div>
<svg style="left:381px;top:396.5px" width="15" height="15"><circle cx="7.5" cy="7.5" r="6" fill="#fff" stroke="#333" stroke-width="1"/><circle cx="7.5" cy="7.5" r="3.5" fill="#222"/></svg>
<div class="t" style="left:398px;top:398.5px;font-size:12px;line-height:13px;color:#101010;font-family:'Liberation Sans',sans-serif;">Rotate</div>
<svg style="left:381px;top:423px" width="15" height="15"><circle cx="7.5" cy="7.5" r="6" fill="#fff" stroke="#333" stroke-width="1"/></svg>
<div class="t" style="left:398px;top:425px;font-size:12px;line-height:13px;color:#101010;font-family:'Liberation Sans',sans-serif;">Mirror</div>
<div class="a" style="left:527px;top:334px;width:13px;height:13px;background:#fff;border:1px solid #333"></div>
<svg style="left:527px;top:334px" width="13" height="13"><path d="M2.5 6.5L5.2 9.5L10.5 2.8" fill="none" stroke="#000" stroke-width="2"/></svg>
<div class="t" style="left:543px;top:336px;font-size:12px;line-height:13px;color:#101010;font-family:'Liberation Sans',sans-serif;">Copy</div>
<div class="a" style="left:527px;top:358px;width:13px;height:13px;background:#fff;border:1px solid #333"></div>
<div class="t" style="left:543px;top:360px;font-size:12px;line-height:13px;color:#101010;font-family:'Liberation Sans',sans-serif;">Unite</div>
<div class="a" style="left:527px;top:407px;width:13px;height:13px;background:#fff;border:1px solid #333"></div>
<div class="t" style="left:543px;top:409px;font-size:12px;line-height:13px;color:#101010;font-family:'Liberation Sans',sans-serif;">Rotate axis aligned</div>
<div class="a" style="left:713px;top:317px;width:86px;height:23px;background:linear-gradient(#f0f0f0,#e5e5e5);border:1px solid #adadad"></div>
<div class="t" style="left:656px;top:323px;width:200px;text-align:center;font-size:12px;line-height:13px;color:#101010;font-family:'Liberation Sans',sans-serif;">OK</div>
<div class="a" style="left:713px;top:345px;width:86px;height:23px;background:linear-gradient(#f0f0f0,#e5e5e5);border:1px solid #3c8fd8"></div>
<div class="t" style="left:656px;top:351px;width:200px;text-align:center;font-size:12px;line-height:13px;color:#101010;font-family:'Liberation Sans',sans-serif;">Preview</div>
<div class="a" style="left:713px;top:373px;width:86px;height:23px;background:linear-gradient(#f0f0f0,#e5e5e5);border:1px solid #adadad"></div>
<div class="t" style="left:656px;top:379px;width:200px;text-align:center;font-size:12px;line-height:13px;color:#101010;font-family:'Liberation Sans',sans-serif;">Apply</div>
<div class="a" style="left:713px;top:401px;width:86px;height:23px;background:linear-gradient(#f0f0f0,#e5e5e5);border:1px solid #adadad"></div>
<div class="t" style="left:656px;top:407px;width:200px;text-align:center;font-size:12px;line-height:13px;color:#101010;font-family:'Liberation Sans',sans-serif;">Cancel</div>
<div class="a" style="left:713px;top:439px;width:86px;height:23px;background:linear-gradient(#f0f0f0,#e5e5e5);border:1px solid #adadad"></div>
<div class="t" style="left:656px;top:445px;width:200px;text-align:center;font-size:12px;line-height:13px;color:#101010;font-family:'Liberation Sans',sans-serif;">Reset</div>
<div class="a" style="left:713px;top:469px;width:86px;height:23px;background:linear-gradient(#f0f0f0,#e5e5e5);border:1px solid #adadad"></div>
<div class="t" style="left:656px;top:475px;width:200px;text-align:center;font-size:12px;line-height:13px;color:#101010;font-family:'Liberation Sans',sans-serif;">Help</div>
<div class="a" style="left:713px;top:499px;width:86px;height:23px;background:linear-gradient(#f0f0f0,#e5e5e5);border:1px solid #adadad"></div>
<div class="t" style="left:656px;top:505px;width:200px;text-align:center;font-size:12px;line-height:13px;color:#101010;font-family:'Liberation Sans',sans-serif;">Less &lt;&lt;</div>
<div class="a" style="left:362px;top:469px;width:341px;height:53px;border:1px solid #dcdcdc;border-radius:1px"></div>
<div class="a" style="left:368px;top:461px;width:66px;height:14px;background:#f0f0f0"></div>
<div class="t" style="left:371px;top:463px;font-size:12px;line-height:13px;color:#101010;font-family:'Liberation Sans',sans-serif;">Repetitions</div>
<div class="t" style="left:376px;top:492px;font-size:12.6px;line-height:14px;color:#101010;font-family:'Liberation Sans',sans-serif;">Repetition factor:</div>
<div class="a" style="left:487px;top:487px;width:161px;height:23px;background:#fff;border:1px solid #a8a8a8"></div>
<div class="t" style="left:492px;top:493px;font-size:12px;line-height:13px;color:#101010;font-family:'Liberation Sans',sans-serif;">1</div>
<div class="a" style="left:631px;top:489px;width:15px;height:9px;background:linear-gradient(#f4f4f4,#e0e0e0);border:1px solid #acacac"></div>
<div class="a" style="left:631px;top:499px;width:15px;height:9px;background:linear-gradient(#f4f4f4,#e0e0e0);border:1px solid #acacac"></div>
<svg style="left:631px;top:489px" width="15" height="20"><path d="M4.5 6L7.5 3L10.5 6Z M4.5 13L7.5 16L10.5 13Z" fill="#000"/></svg>
<div class="a" style="left:362px;top:539px;width:438px;height:55px;border:1px solid #dcdcdc;border-radius:1px"></div>
<div class="a" style="left:368px;top:531px;width:92px;height:14px;background:#f0f0f0"></div>
<div class="t" style="left:371px;top:533px;font-size:12px;line-height:13px;color:#101010;font-family:'Liberation Sans',sans-serif;">Rotation angles</div>
<div class="t" style="left:376px;top:565px;font-size:12px;line-height:13px;color:#101010;font-family:'Liberation Sans',sans-serif;">X:</div>
<div class="a" style="left:397px;top:559px;width:110px;height:21px;background:#fff;border:1px solid #a8a8a8"></div>
<div class="t" style="left:402px;top:565px;font-size:12px;line-height:13px;color:#101010;font-family:'Liberation Sans',sans-serif;">0</div>
<div class="t" style="left:517px;top:565px;font-size:12px;line-height:13px;color:#101010;font-family:'Liberation Sans',sans-serif;">Y:</div>
<div class="a" style="left:537px;top:559px;width:110px;height:21px;background:#fff;border:1px solid #a8a8a8"></div>
<div class="t" style="left:542px;top:565px;font-size:12px;line-height:13px;color:#101010;font-family:'Liberation Sans',sans-serif;">0</div>
<div class="t" style="left:658px;top:565px;font-size:12px;line-height:13px;color:#101010;font-family:'Liberation Sans',sans-serif;">Z:</div>
<div class="a" style="left:679px;top:559px;width:110px;height:21px;background:#fff;border:1px solid #a8a8a8"></div>
<div class="t" style="left:684px;top:565px;font-size:12px;line-height:13px;color:#101010;font-family:'Liberation Sans',sans-serif;">180</div>
<div class="a" style="left:362px;top:611px;width:438px;height:76px;border:1px solid #dcdcdc;border-radius:1px"></div>
<div class="a" style="left:368px;top:603px;width:44px;height:14px;background:#f0f0f0"></div>
<div class="t" style="left:371px;top:604px;font-size:12px;line-height:13px;color:#101010;font-family:'Liberation Sans',sans-serif;">Origin</div>
<div class="a" style="left:375px;top:626px;width:13px;height:13px;background:#fff;border:1px solid #333"></div>
<div class="t" style="left:391px;top:628px;font-size:12px;line-height:13px;color:#101010;font-family:'Liberation Sans',sans-serif;">Shape center</div>
<div class="t" style="left:373px;top:660px;font-size:12px;line-height:13px;color:#101010;font-family:'Liberation Sans',sans-serif;">X0:</div>
<div class="a" style="left:397px;top:654px;width:110px;height:21px;background:#fff;border:1px solid #a8a8a8"></div>
<div class="t" style="left:402px;top:660px;font-size:12px;line-height:13px;color:#101010;font-family:'Liberation Sans',sans-serif;">0</div>
<div class="t" style="left:516px;top:660px;font-size:12px;line-height:13px;color:#101010;font-family:'Liberation Sans',sans-serif;">Y0:</div>
<div class="a" style="left:537px;top:654px;width:110px;height:21px;background:#fff;border:1px solid #a8a8a8"></div>
<div class="t" style="left:542px;top:660px;font-size:12px;line-height:13px;color:#101010;font-family:'Liberation Sans',sans-serif;">0</div>
<div class="t" style="left:655px;top:660px;font-size:12px;line-height:13px;color:#101010;font-family:'Liberation Sans',sans-serif;">Z0:</div>
<div class="a" style="left:679px;top:654px;width:110px;height:21px;background:#fff;border:1px solid #a8a8a8"></div>
<div class="t" style="left:684px;top:660px;font-size:12px;line-height:13px;color:#101010;font-family:'Liberation Sans',sans-serif;">0</div>
<div class="a" style="left:362px;top:703px;width:438px;height:79px;border:1px solid #dcdcdc;border-radius:1px"></div>
<div class="a" style="left:368px;top:695px;width:110px;height:14px;background:#f0f0f0"></div>
<div class="t" style="left:371px;top:698px;font-size:12px;line-height:13px;color:#101010;font-family:'Liberation Sans',sans-serif;">Change destination</div>
<div class="a" style="left:375px;top:726px;width:13px;height:13px;background:#fff;border:1px solid #333"></div>
<div class="t" style="left:391px;top:729px;font-size:12px;line-height:13px;color:#101010;font-family:'Liberation Sans',sans-serif;">Component:</div>
<div class="a" style="left:597px;top:726px;width:13px;height:13px;background:#fff;border:1px solid #333"></div>
<div class="t" style="left:613px;top:729px;font-size:12px;line-height:13px;color:#101010;font-family:'Liberation Sans',sans-serif;">Material:</div>
<div class="a" style="left:375px;top:746px;width:193px;height:22px;background:#f4f4f4;border:1px solid #dadada"></div>
<div class="a" style="left:377px;top:748px;width:170px;height:18px;background:#ebebeb"></div>
<div class="t" style="left:380px;top:752px;font-size:12px;line-height:13px;color:#7a7a7a;font-family:'Liberation Sans',sans-serif;">Log_Spiral</div>
<div class="a" style="left:597px;top:746px;width:193px;height:22px;background:#ebebeb;border:1px solid #dadada"></div>
<div class="t" style="left:600px;top:753px;font-size:12px;line-height:13px;color:#7a7a7a;font-family:'Liberation Sans',sans-serif;">PEC</div>
<svg style="left:553px;top:752px" width="12" height="10"><path d="M2 3L6 7L10 3" fill="none" stroke="#a0a0a0" stroke-width="1.3"/></svg>
<svg style="left:775px;top:752px" width="12" height="10"><path d="M2 3L6 7L10 3" fill="none" stroke="#a0a0a0" stroke-width="1.3"/></svg>
<svg style="left:0;top:0" width="1407" height="865">
<path d="M151.5 176.5L360.9 84.4" stroke="#e41414" stroke-width="2.2" stroke-linecap="round"/><path d="M371.0 80.0L360.9 89.4L357.3 81.1Z" fill="#e41414"/>
<path d="M384.5 67.5L518.1 278.1" stroke="#e41414" stroke-width="2.2" stroke-linecap="round"/><path d="M524.0 287.4L513.2 278.8L520.8 274.0Z" fill="#e41414"/>
<path d="M496.1 319.8L429.7 388.6" stroke="#e41414" stroke-width="2.2" stroke-linecap="round"/><path d="M422.1 396.5L427.9 384.0L434.4 390.3Z" fill="#e41414"/>
<path d="M457.4 402.5L510.6 356.3" stroke="#e41414" stroke-width="2.2" stroke-linecap="round"/><path d="M518.9 349.1L512.0 361.0L506.1 354.2Z" fill="#e41414"/>
<path d="M598.3 343.6L690.1 540.2" stroke="#e41414" stroke-width="2.2" stroke-linecap="round"/><path d="M694.8 550.2L685.2 540.3L693.4 536.5Z" fill="#e41414"/>
<path d="M697.3 514.1L734.7 343.2" stroke="#e41414" stroke-width="2.2" stroke-linecap="round"/><path d="M737.0 332.5L738.6 346.2L729.8 344.2Z" fill="#e41414"/>
</svg>
</body></html>
